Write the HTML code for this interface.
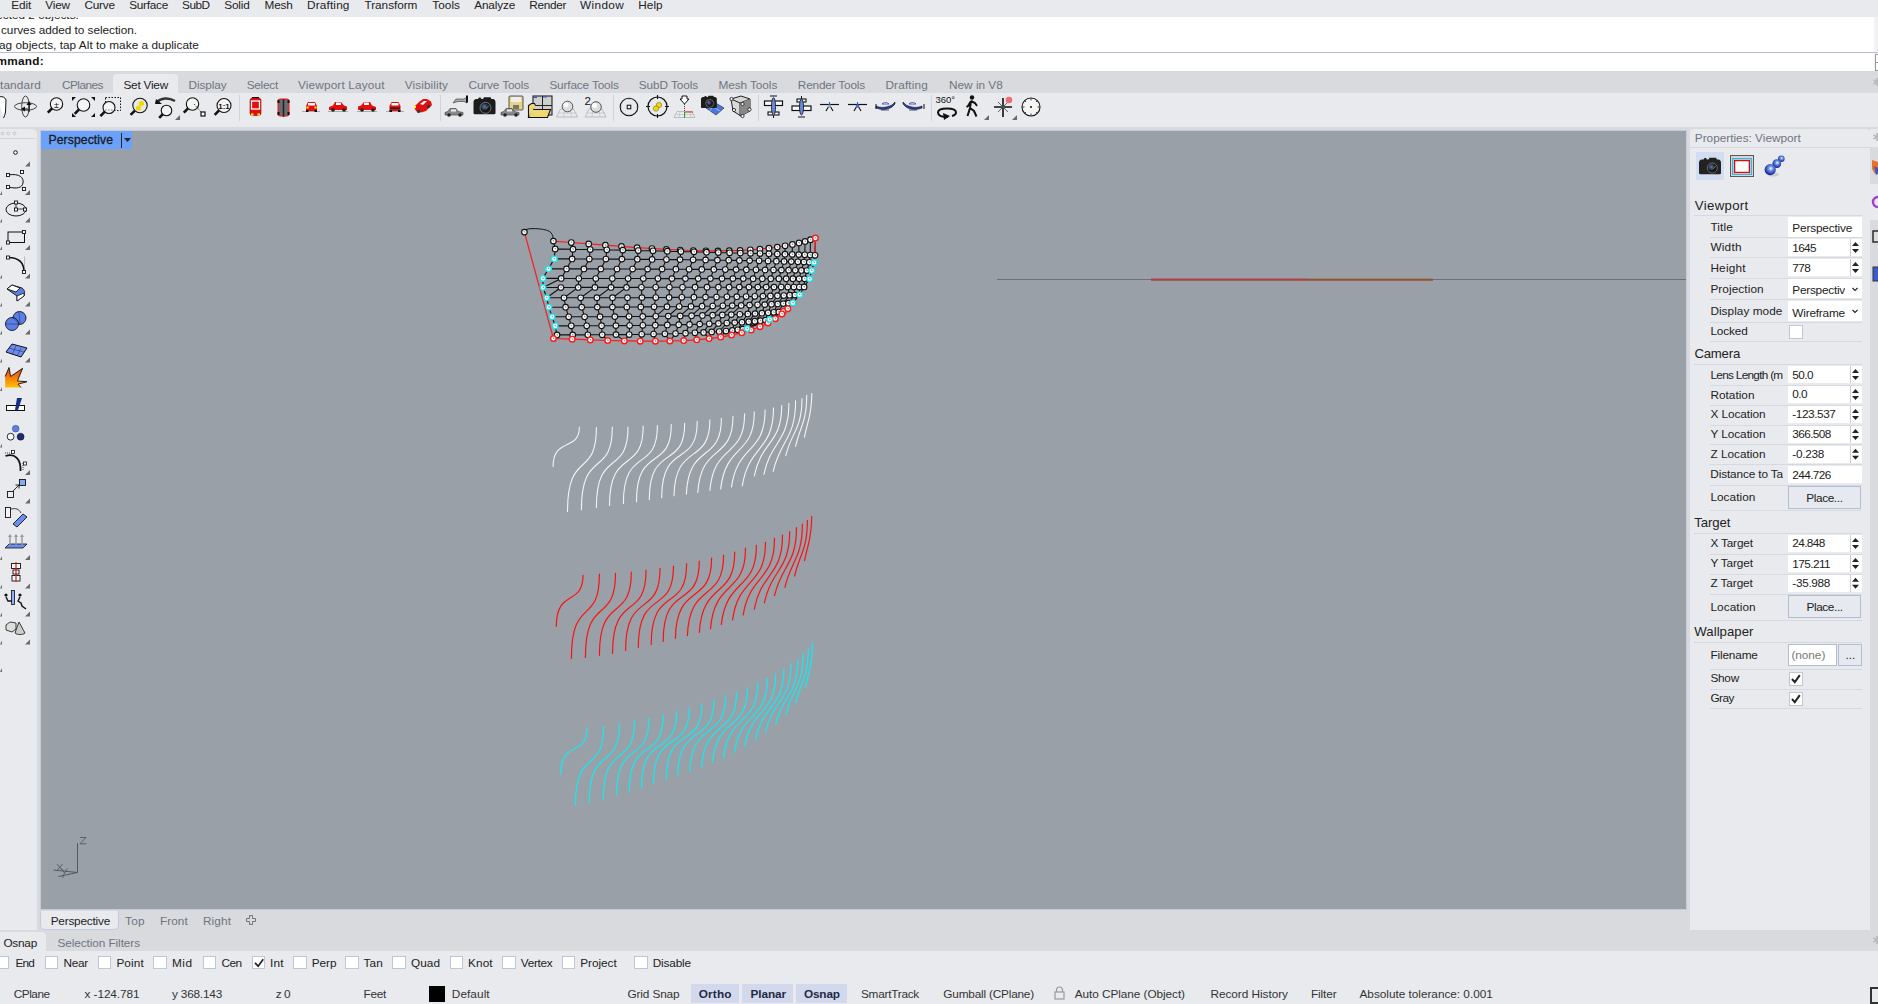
<!DOCTYPE html><html><head><meta charset="utf-8"><style>
html,body{margin:0;padding:0;}
body{width:1878px;height:1004px;position:relative;overflow:hidden;background:#e9eaee;font-family:"Liberation Sans", sans-serif;}
.t{position:absolute;white-space:nowrap;line-height:1;}
.r{position:absolute;}
svg{position:absolute;overflow:visible;}
</style></head><body><div class="r" style="left:0px;top:0px;width:1878px;height:17px;background:#e9eaee;"></div><div class="t" style="left:11.2px;top:0.31px;font-size:11.8px;color:#222;font-weight:normal;letter-spacing:-0.083px;">Edit</div><div class="t" style="left:45.3px;top:0.31px;font-size:11.8px;color:#222;font-weight:normal;letter-spacing:-0.191px;">View</div><div class="t" style="left:84.4px;top:0.31px;font-size:11.8px;color:#222;font-weight:normal;letter-spacing:-0.175px;">Curve</div><div class="t" style="left:129.2px;top:0.31px;font-size:11.8px;color:#222;font-weight:normal;letter-spacing:-0.252px;">Surface</div><div class="t" style="left:182.0px;top:0.31px;font-size:11.8px;color:#222;font-weight:normal;letter-spacing:-0.479px;">SubD</div><div class="t" style="left:224.3px;top:0.31px;font-size:11.8px;color:#222;font-weight:normal;letter-spacing:-0.188px;">Solid</div><div class="t" style="left:264.5px;top:0.31px;font-size:11.8px;color:#222;font-weight:normal;letter-spacing:-0.188px;">Mesh</div><div class="t" style="left:307.0px;top:0.31px;font-size:11.8px;color:#222;font-weight:normal;letter-spacing:0.161px;">Drafting</div><div class="t" style="left:364.5px;top:0.31px;font-size:11.8px;color:#222;font-weight:normal;letter-spacing:-0.047px;">Transform</div><div class="t" style="left:432.3px;top:0.31px;font-size:11.8px;color:#222;font-weight:normal;letter-spacing:0.031px;">Tools</div><div class="t" style="left:474.2px;top:0.31px;font-size:11.8px;color:#222;font-weight:normal;letter-spacing:-0.154px;">Analyze</div><div class="t" style="left:529.2px;top:0.31px;font-size:11.8px;color:#222;font-weight:normal;letter-spacing:-0.283px;">Render</div><div class="t" style="left:580.1px;top:0.31px;font-size:11.8px;color:#222;font-weight:normal;letter-spacing:0.322px;">Window</div><div class="t" style="left:638.2px;top:0.31px;font-size:11.8px;color:#222;font-weight:normal;letter-spacing:0.058px;">Help</div><div class="r" style="left:0;top:17px;width:1874px;height:54px;background:#fff;overflow:hidden"><div class="t" style="left:-13.0px;top:-7.19px;font-size:11.8px;color:#222;font-weight:normal;">elected 2 objects.</div><div class="t" style="left:1.0px;top:7.81px;font-size:11.8px;color:#222;font-weight:normal;letter-spacing:-0.042px;">curves added to selection.</div><div class="t" style="left:-1.0px;top:22.81px;font-size:11.8px;color:#222;font-weight:normal;letter-spacing:0.032px;">ag objects, tap Alt to make a duplicate</div><div class="r" style="left:0px;top:35px;width:1874px;height:1px;background:#b7c0d2;"></div><div class="t" style="left:-3.5px;top:38.81px;font-size:11.8px;color:#111;font-weight:bold;letter-spacing:0.268px;">mmand:</div></div><div class="r" style="left:0px;top:71px;width:1878px;height:22px;background:#d9dade;"></div><div class="r" style="left:113px;top:74px;width:65px;height:19px;background:#e9eaee;border-radius:4px 4px 0 0;"></div><div class="t" style="left:-8.0px;top:79.81px;font-size:11.8px;color:#6e7480;font-weight:normal;letter-spacing:0.139px;">Standard</div><div class="t" style="left:62.0px;top:79.81px;font-size:11.8px;color:#6e7480;font-weight:normal;letter-spacing:-0.514px;">CPlanes</div><div class="t" style="left:123.4px;top:79.81px;font-size:11.8px;color:#222;font-weight:normal;letter-spacing:-0.219px;">Set View</div><div class="t" style="left:188.6px;top:79.81px;font-size:11.8px;color:#6e7480;font-weight:normal;letter-spacing:-0.098px;">Display</div><div class="t" style="left:246.7px;top:79.81px;font-size:11.8px;color:#6e7480;font-weight:normal;letter-spacing:-0.249px;">Select</div><div class="t" style="left:298.0px;top:79.81px;font-size:11.8px;color:#6e7480;font-weight:normal;letter-spacing:0.147px;">Viewport Layout</div><div class="t" style="left:404.8px;top:79.81px;font-size:11.8px;color:#6e7480;font-weight:normal;letter-spacing:0.079px;">Visibility</div><div class="t" style="left:468.5px;top:79.81px;font-size:11.8px;color:#6e7480;font-weight:normal;letter-spacing:-0.144px;">Curve Tools</div><div class="t" style="left:549.4px;top:79.81px;font-size:11.8px;color:#6e7480;font-weight:normal;letter-spacing:-0.152px;">Surface Tools</div><div class="t" style="left:638.8px;top:79.81px;font-size:11.8px;color:#6e7480;font-weight:normal;letter-spacing:-0.093px;">SubD Tools</div><div class="t" style="left:718.4px;top:79.81px;font-size:11.8px;color:#6e7480;font-weight:normal;letter-spacing:-0.056px;">Mesh Tools</div><div class="t" style="left:797.8px;top:79.81px;font-size:11.8px;color:#6e7480;font-weight:normal;letter-spacing:-0.176px;">Render Tools</div><div class="t" style="left:885.4px;top:79.81px;font-size:11.8px;color:#6e7480;font-weight:normal;letter-spacing:0.161px;">Drafting</div><div class="t" style="left:949.0px;top:79.81px;font-size:11.8px;color:#6e7480;font-weight:normal;letter-spacing:0.002px;">New in V8</div><div class="r" style="left:0px;top:93px;width:1878px;height:34px;background:#e9eaee;"></div><div class="r" style="left:238.5px;top:94.5px;width:1.2px;height:26px;background:#cdd3e0;"></div><div class="r" style="left:440px;top:94.5px;width:1.2px;height:26px;background:#cdd3e0;"></div><div class="r" style="left:612.5px;top:94.5px;width:1.2px;height:26px;background:#cdd3e0;"></div><div class="r" style="left:757.5px;top:94.5px;width:1.2px;height:26px;background:#cdd3e0;"></div><div class="r" style="left:930.5px;top:94.5px;width:1.2px;height:26px;background:#cdd3e0;"></div><div class="r" style="left:0px;top:127px;width:1878px;height:824px;background:#d9dade;"></div><div class="r" style="left:0px;top:129px;width:37px;height:801px;background:#e9eaee;border-radius:0 5px 0 0;"></div><div class="r" style="left:41px;top:131px;width:1645px;height:778px;background:#9aa0a8;"></div><div class="r" style="left:40px;top:130px;width:1647px;height:1px;background:#c5cadb;"></div><div class="r" style="left:40px;top:131px;width:1px;height:778px;background:#c5cadb;"></div><div class="r" style="left:1686px;top:131px;width:1px;height:779px;background:#c5cadb;"></div><div class="r" style="left:40px;top:909px;width:1647px;height:1px;background:#c5cadb;"></div><div class="r" style="left:41px;top:910px;width:1645px;height:20px;background:#d9dade;"></div><div class="r" style="left:40px;top:911px;width:79px;height:19px;background:#e9eaee;border:1px solid #c3cadb;border-top:none;box-sizing:border-box;border-radius:0 0 5px 5px"></div><div class="r" style="left:1690px;top:129px;width:180px;height:801px;background:#e9eaee;border-radius:4px 4px 0 0;"></div><div class="r" style="left:1870px;top:129px;width:8px;height:18px;background:#e9eaee;"></div><div class="r" style="left:1870px;top:184px;width:8px;height:36px;background:#e9eaee;"></div><svg style="left:0;top:0" width="1" height="1"><path d="M1872 160l6 2v10l-3 2l-3-5z" fill="#e8702a"/><path d="M1874 166l4 2v6l-2 1z" fill="#3a5ad0"/><circle cx="1878" cy="202" r="5" fill="none" stroke="#a040d0" stroke-width="2.5"/><rect x="1873" y="231" width="6" height="11" fill="#ddd" stroke="#222" stroke-width="1.4"/><rect x="1873" y="267" width="6" height="14" fill="#3a5ad0" stroke="#333" stroke-width="1"/><path d="M1877 78v8M1873.5 80l7 4M1873.5 84l7-4M1877 133v8M1873.5 135l7 4M1873.5 139l7-4" stroke="#b8b8bc" stroke-width="1.6"/></svg><div class="r" style="left:1874px;top:17px;width:4px;height:35px;background:#f2f2f4;"></div><svg style="left:0;top:0" width="1" height="1"><path d="M1877 936v8M1873.5 938l7 4M1873.5 942l7-4" stroke="#b8b8bc" stroke-width="1.6"/></svg><div class="r" style="left:1874px;top:52px;width:4px;height:1px;background:#b7c0d2;"></div><div class="r" style="left:1874px;top:53px;width:4px;height:18px;background:#f2f2f4;"></div><div class="r" style="left:1875px;top:54px;width:6px;height:7px;border:1px solid #999;background:#fff"></div><div class="r" style="left:1875px;top:62px;width:6px;height:7px;border:1px solid #999;background:#fff"></div><svg style="left:0;top:0" width="1878" height="1004" viewBox="0 0 1878 1004"><defs><clipPath id="vpc"><rect x="41" y="131" width="1645" height="778"/></clipPath></defs><g clip-path="url(#vpc)"><path d="M997 279.5H1686" stroke="#6b7077" stroke-width="1"/><path d="M1151 279.6H1433" stroke="#a8443f" stroke-width="2.2"/><path d="M1308 278.5H1433" stroke="#6aa06a" stroke-width="1"/><path d="M553.1 466.5C553.1 436.9 579.4 451.5 579.4 427.1M567.5 511.6C567.5 448.6 596.4 479.6 596.4 427.6M581.4 509.7C581.4 447.8 612.3 478.3 612.3 427.1M596.4 507.4C596.4 447.2 628.0 476.9 628.0 427.1M609.5 505.4C609.5 445.9 643.2 475.2 643.2 426.0M623.4 503.5C623.4 445.0 657.4 473.9 657.4 425.6M636.5 501.7C636.5 443.8 671.3 472.3 671.3 424.5M649.3 499.7C649.3 442.3 684.7 470.6 684.7 423.2M661.7 497.7C661.7 440.5 697.2 468.7 697.2 421.4M674.0 495.8C675.1 441.2 709.9 466.4 709.9 419.8M686.4 494.0C688.5 441.9 721.4 464.0 721.4 418.3M697.8 492.4C701.1 442.3 733.0 461.7 733.0 416.3M709.9 490.4C714.1 442.3 744.6 458.9 744.6 413.7M720.7 488.9C725.8 442.8 754.3 456.6 754.3 411.7M731.5 486.9C737.7 443.5 765.1 454.2 765.1 410.1M742.3 485.8C749.0 444.1 773.5 451.9 773.5 407.8M754.3 476.0C761.1 440.5 781.7 444.9 781.7 405.5M763.9 474.5C770.8 440.8 788.9 442.5 788.9 403.2M773.2 471.4C780.1 440.2 795.6 439.2 795.6 400.8M785.8 455.7C791.3 432.2 802.0 429.1 802.0 398.5M795.6 446.4C799.7 427.0 806.7 422.3 806.7 395.4M804.4 437.1C807.3 421.9 811.8 416.2 811.8 393.6" fill="none" stroke="#f4f4f4" stroke-width="1.1" stroke-linecap="round"/><path d="M556.3 626.3C556.3 588.1 583.0 606.9 583.0 575.3M571.4 658.5C571.4 595.3 599.4 626.5 599.4 574.2M585.4 657.4C585.4 594.3 615.5 625.4 615.5 573.3M599.4 655.3C599.4 592.9 631.3 623.7 631.3 572.1M612.5 653.4C612.5 591.0 646.0 621.8 646.0 570.2M625.6 650.5C625.6 589.0 660.0 619.4 660.0 568.5M638.3 647.3C638.3 586.4 673.5 616.5 673.5 566.1M651.2 644.6C651.2 583.9 686.6 613.9 686.6 563.7M663.2 641.5C663.2 581.1 699.3 610.9 699.3 561.0M675.4 638.3C676.5 580.6 711.6 607.2 711.6 558.1M687.4 635.6C689.6 580.2 723.6 603.7 723.6 555.1M699.3 632.4C702.6 579.7 734.7 600.1 734.7 552.2M710.5 628.7C714.8 578.3 745.5 595.7 745.5 548.2M721.3 624.4C726.7 577.3 756.4 591.3 756.4 545.4M732.5 619.9C738.6 576.1 765.5 586.9 765.5 542.3M743.2 614.8C749.9 574.0 774.5 581.7 774.5 538.4M754.3 609.1C761.3 571.9 782.5 576.5 782.5 535.2M764.3 602.9C771.4 569.1 789.7 570.8 789.7 531.5M774.5 595.7C781.3 565.6 796.5 564.6 796.5 527.5M784.9 587.3C790.8 561.2 802.4 557.9 802.4 524.0M794.6 576.1C799.3 554.9 807.4 549.8 807.4 520.4M804.5 560.7C807.4 545.2 811.7 539.4 811.7 516.4" fill="none" stroke="#ff1010" stroke-width="1.2" stroke-linecap="round"/><path d="M560.6 774.3C560.6 739.7 587.0 756.8 587.0 728.2M575.5 805.3C575.5 746.1 603.6 775.3 603.6 726.4M589.3 802.4C589.3 743.3 619.4 772.5 619.4 723.6M603.3 799.4C603.3 740.2 634.5 769.4 634.5 720.5M616.5 794.9C616.5 737.4 649.0 765.8 649.0 718.2M629.3 791.3C629.3 734.2 663.3 762.4 663.3 715.1M641.6 787.4C641.6 730.8 676.6 758.7 676.6 711.9M653.5 783.3C653.5 726.8 689.3 754.6 689.3 708.0M666.4 779.1C666.4 722.8 701.9 750.6 701.9 704.0M677.7 775.2C678.8 721.3 713.9 746.1 713.9 700.3M689.7 771.2C691.9 719.4 725.5 741.5 725.5 696.0M701.7 767.1C704.9 717.8 736.6 736.9 736.6 692.2M712.6 762.3C716.9 715.5 747.6 731.7 747.6 687.7M723.4 757.6C728.7 713.1 757.8 726.3 757.8 682.9M734.5 752.2C740.5 710.5 767.3 720.8 767.3 678.4M744.9 746.1C751.5 707.5 775.7 714.8 775.7 673.9M755.5 739.3C762.4 704.1 783.8 708.5 783.8 669.4M765.5 732.2C772.5 699.9 790.9 701.6 790.9 664.1M775.7 724.1C782.5 695.6 797.8 694.6 797.8 659.6M785.9 714.6C791.7 689.7 803.1 686.5 803.1 654.2M795.8 702.6C800.4 682.1 808.3 677.2 808.3 648.8M805.6 687.0C808.4 671.8 812.5 666.1 812.5 643.4" fill="none" stroke="#18e8ee" stroke-width="1.3" stroke-linecap="round"/><path d="M555.2 248.9L573.0 249.2L590.2 249.5L606.8 249.8L622.8 250.1L638.2 250.5L653.0 250.8L667.3 251.2L680.9 251.5L694.0 251.8L706.5 252.2L718.3 252.5L729.6 252.8L740.3 253.0L750.5 253.3L760.0 253.5L768.9 253.8L777.3 254.0L785.0 254.2L792.2 254.4L798.8 254.6L804.8 254.8L810.2 255.0L815.0 255.3M554.3 258.9L572.1 258.9L589.3 259.0L605.9 259.0L621.9 259.1L637.3 259.2L652.1 259.4L666.4 259.5L680.0 259.6L693.1 259.8L705.6 259.9L717.4 260.1L728.7 260.2L739.4 260.4L749.6 260.6L759.1 260.8L768.0 261.0L776.4 261.2L784.1 261.4L791.3 261.6L797.9 261.8L803.9 262.0L809.3 262.3L814.1 262.5M548.5 268.8L566.5 268.9L583.9 268.9L600.8 268.9L617.0 269.0L632.6 269.0L647.6 269.1L662.1 269.1L675.9 269.2L689.1 269.3L701.8 269.4L713.8 269.4L725.3 269.5L736.1 269.6L746.3 269.7L756.0 269.8L765.1 269.9L773.5 270.0L781.4 270.1L788.6 270.2L795.3 270.3L801.4 270.4L806.9 270.5L811.7 270.6M542.9 278.4L561.2 278.4L578.8 278.5L595.8 278.5L612.3 278.5L628.1 278.5L643.3 278.5L657.9 278.5L671.9 278.6L685.4 278.6L698.2 278.6L710.4 278.6L722.0 278.6L732.9 278.6L743.3 278.6L753.1 278.7L762.3 278.7L770.8 278.7L778.8 278.7L786.2 278.7L792.9 278.7L799.1 278.8L804.6 278.8L809.6 278.8M543.1 287.5L560.9 287.5L578.2 287.4L594.9 287.4L611.0 287.4L626.5 287.4L641.4 287.3L655.7 287.3L669.4 287.3L682.5 287.3L695.1 287.2L707.0 287.2L718.4 287.2L729.1 287.2L739.3 287.1L748.9 287.1L757.8 287.1L766.2 287.1L774.0 287.1L781.2 287.0L787.8 287.0L793.9 287.0L799.3 287.0L804.1 286.9M546.7 297.8L564.0 297.8L580.7 297.8L596.9 297.7L612.5 297.7L627.5 297.7L641.9 297.6L655.8 297.5L669.1 297.4L681.8 297.3L693.9 297.2L705.5 297.1L716.5 297.0L726.9 296.8L736.8 296.7L746.1 296.5L754.8 296.3L762.9 296.1L770.4 295.9L777.4 295.7L783.8 295.5L789.7 295.2L794.9 295.0L799.6 294.7M548.9 307.2L565.6 307.2L581.7 307.2L597.3 307.1L612.4 307.1L626.8 307.0L640.8 306.9L654.1 306.8L667.0 306.7L679.2 306.5L691.0 306.4L702.1 306.2L712.7 306.0L722.8 305.8L732.3 305.6L741.2 305.4L749.6 305.1L757.5 304.8L764.8 304.6L771.5 304.2L777.7 303.9L783.3 303.6L788.4 303.2L792.9 302.9M552.1 316.8L568.7 316.8L584.6 316.8L600.0 316.7L614.8 316.6L629.0 316.5L642.7 316.4L655.8 316.3L668.3 316.1L680.2 315.9L691.6 315.7L702.4 315.4L712.6 315.2L722.3 314.9L731.3 314.6L739.8 314.3L747.8 313.9L755.1 313.6L761.9 313.2L768.1 312.8L773.8 312.3L778.8 311.9L783.3 311.4M555.2 325.9L571.3 325.8L586.7 325.8L601.6 325.7L615.9 325.6L629.6 325.5L642.8 325.3L655.3 325.2L667.3 324.9L678.7 324.7L689.5 324.4L699.7 324.1L709.3 323.8L718.4 323.4L726.8 323.0L734.7 322.6L742.0 322.2L748.7 321.7L754.8 321.2L760.4 320.7L765.4 320.1L769.7 319.5M557.0 334.9L572.7 334.9L587.8 334.8L602.2 334.8L616.0 334.6L629.2 334.5L641.7 334.3L653.6 334.0L664.9 333.8L675.5 333.5L685.5 333.2L694.9 332.8L703.6 332.4L711.7 331.9L719.2 331.5L726.0 331.0L732.3 330.4L737.8 329.8L742.8 329.2L747.1 328.6M555.2 248.9L554.3 258.9M573.0 249.2L572.1 258.9M590.2 249.5L589.3 259.0M606.8 249.8L605.9 259.0M622.8 250.1L621.9 259.1M638.2 250.5L637.3 259.2M653.0 250.8L652.1 259.4M667.3 251.2L666.4 259.5M680.9 251.5L680.0 259.6M694.0 251.8L693.1 259.8M706.5 252.2L705.6 259.9M718.3 252.5L717.4 260.1M729.6 252.8L728.7 260.2M740.3 253.0L739.4 260.4M750.5 253.3L749.6 260.6M760.0 253.5L759.1 260.8M768.9 253.8L768.0 261.0M777.3 254.0L776.4 261.2M785.0 254.2L784.1 261.4M792.2 254.4L791.3 261.6M798.8 254.6L797.9 261.8M804.8 254.8L803.9 262.0M810.2 255.0L809.3 262.3M815.0 255.3L814.1 262.5M554.3 258.9L548.5 268.8M572.1 258.9L566.5 268.9M589.3 259.0L583.9 268.9M605.9 259.0L600.8 268.9M621.9 259.1L617.0 269.0M637.3 259.2L632.6 269.0M652.1 259.4L647.6 269.1M666.4 259.5L662.1 269.1M680.0 259.6L675.9 269.2M693.1 259.8L689.1 269.3M705.6 259.9L701.8 269.4M717.4 260.1L713.8 269.4M728.7 260.2L725.3 269.5M739.4 260.4L736.1 269.6M749.6 260.6L746.3 269.7M759.1 260.8L756.0 269.8M768.0 261.0L765.1 269.9M776.4 261.2L773.5 270.0M784.1 261.4L781.4 270.1M791.3 261.6L788.6 270.2M797.9 261.8L795.3 270.3M803.9 262.0L801.4 270.4M809.3 262.3L806.9 270.5M814.1 262.5L811.7 270.6M548.5 268.8L542.9 278.4M566.5 268.9L561.2 278.4M583.9 268.9L578.8 278.5M600.8 268.9L595.8 278.5M617.0 269.0L612.3 278.5M632.6 269.0L628.1 278.5M647.6 269.1L643.3 278.5M662.1 269.1L657.9 278.5M675.9 269.2L671.9 278.6M689.1 269.3L685.4 278.6M701.8 269.4L698.2 278.6M713.8 269.4L710.4 278.6M725.3 269.5L722.0 278.6M736.1 269.6L732.9 278.6M746.3 269.7L743.3 278.6M756.0 269.8L753.1 278.7M765.1 269.9L762.3 278.7M773.5 270.0L770.8 278.7M781.4 270.1L778.8 278.7M788.6 270.2L786.2 278.7M795.3 270.3L792.9 278.7M801.4 270.4L799.1 278.8M806.9 270.5L804.6 278.8M811.7 270.6L809.6 278.8M542.9 278.4L543.1 287.5M561.2 278.4L543.1 287.5M578.8 278.5L578.2 287.4M595.8 278.5L594.9 287.4M612.3 278.5L611.0 287.4M628.1 278.5L626.5 287.4M643.3 278.5L641.4 287.3M657.9 278.5L655.7 287.3M671.9 278.6L669.4 287.3M685.4 278.6L682.5 287.3M698.2 278.6L695.1 287.2M710.4 278.6L707.0 287.2M722.0 278.6L718.4 287.2M732.9 278.6L729.1 287.2M743.3 278.6L739.3 287.1M753.1 278.7L748.9 287.1M762.3 278.7L757.8 287.1M770.8 278.7L766.2 287.1M778.8 278.7L781.2 287.0M786.2 278.7L787.8 287.0M792.9 278.7L793.9 287.0M799.1 278.8L799.3 287.0M804.6 278.8L804.1 286.9M809.6 278.8L804.1 286.9M543.1 287.5L546.7 297.8M560.9 287.5L546.7 297.8M578.2 287.4L564.0 297.8M594.9 287.4L580.7 297.8M611.0 287.4L596.9 297.7M626.5 287.4L612.5 297.7M641.4 287.3L641.9 297.6M655.7 287.3L655.8 297.5M669.4 287.3L669.1 297.4M682.5 287.3L681.8 297.3M695.1 287.2L693.9 297.2M707.0 287.2L705.5 297.1M718.4 287.2L716.5 297.0M729.1 287.2L726.9 296.8M739.3 287.1L736.8 296.7M748.9 287.1L746.1 296.5M757.8 287.1L754.8 296.3M766.2 287.1L762.9 296.1M774.0 287.1L770.4 295.9M781.2 287.0L777.4 295.7M787.8 287.0L789.7 295.2M793.9 287.0L794.9 295.0M799.3 287.0L799.6 294.7M804.1 286.9L799.6 294.7M546.7 297.8L548.9 307.2M564.0 297.8L565.6 307.2M580.7 297.8L581.7 307.2M596.9 297.7L597.3 307.1M612.5 297.7L612.4 307.1M627.5 297.7L626.8 307.0M641.9 297.6L640.8 306.9M655.8 297.5L654.1 306.8M669.1 297.4L667.0 306.7M681.8 297.3L679.2 306.5M693.9 297.2L691.0 306.4M705.5 297.1L702.1 306.2M716.5 297.0L712.7 306.0M726.9 296.8L722.8 305.8M736.8 296.7L732.3 305.6M746.1 296.5L741.2 305.4M754.8 296.3L749.6 305.1M762.9 296.1L757.5 304.8M770.4 295.9L764.8 304.6M777.4 295.7L771.5 304.2M783.8 295.5L777.7 303.9M789.7 295.2L783.3 303.6M794.9 295.0L788.4 303.2M799.6 294.7L792.9 302.9M548.9 307.2L552.1 316.8M565.6 307.2L568.7 316.8M581.7 307.2L584.6 316.8M597.3 307.1L600.0 316.7M612.4 307.1L614.8 316.6M626.8 307.0L629.0 316.5M640.8 306.9L642.7 316.4M654.1 306.8L655.8 316.3M667.0 306.7L655.8 316.3M679.2 306.5L668.3 316.1M691.0 306.4L680.2 315.9M702.1 306.2L691.6 315.7M712.7 306.0L702.4 315.4M722.8 305.8L712.6 315.2M732.3 305.6L722.3 314.9M741.2 305.4L731.3 314.6M749.6 305.1L747.8 313.9M757.5 304.8L755.1 313.6M764.8 304.6L761.9 313.2M771.5 304.2L768.1 312.8M777.7 303.9L773.8 312.3M783.3 303.6L778.8 311.9M788.4 303.2L783.3 311.4M792.9 302.9L783.3 311.4M552.1 316.8L555.2 325.9M568.7 316.8L571.3 325.8M584.6 316.8L586.7 325.8M600.0 316.7L601.6 325.7M614.8 316.6L615.9 325.6M629.0 316.5L629.6 325.5M642.7 316.4L642.8 325.3M655.8 316.3L655.3 325.2M668.3 316.1L667.3 324.9M680.2 315.9L678.7 324.7M691.6 315.7L689.5 324.4M702.4 315.4L699.7 324.1M712.6 315.2L709.3 323.8M722.3 314.9L718.4 323.4M731.3 314.6L726.8 323.0M739.8 314.3L734.7 322.6M747.8 313.9L742.0 322.2M755.1 313.6L748.7 321.7M761.9 313.2L754.8 321.2M768.1 312.8L765.4 320.1M773.8 312.3L769.7 319.5M778.8 311.9L769.7 319.5M783.3 311.4L769.7 319.5M555.2 325.9L557.0 334.9M571.3 325.8L572.7 334.9M586.7 325.8L587.8 334.8M601.6 325.7L602.2 334.8M615.9 325.6L616.0 334.6M629.6 325.5L629.2 334.5M642.8 325.3L641.7 334.3M655.3 325.2L653.6 334.0M667.3 324.9L664.9 333.8M678.7 324.7L675.5 333.5M689.5 324.4L685.5 333.2M699.7 324.1L694.9 332.8M709.3 323.8L703.6 332.4M718.4 323.4L711.7 331.9M726.8 323.0L719.2 331.5M734.7 322.6L732.3 330.4M742.0 322.2L737.8 329.8M748.7 321.7L742.8 329.2M754.8 321.2L747.1 328.6M760.4 320.7L747.1 328.6M765.4 320.1L747.1 328.6M769.7 319.5L747.1 328.6M555.2 248.9L553.4 241.1M573.0 249.2L571.3 242.5M590.2 249.5L588.7 243.9M606.8 249.8L605.4 245.2M622.8 250.1L621.5 246.4M638.2 250.5L637.1 247.6M653.0 250.8L652.0 248.5M667.3 251.2L666.4 249.4M680.9 251.5L680.2 250.0M694.0 251.8L693.3 250.5M706.5 252.2L705.9 250.8M718.3 252.5L717.9 250.9M729.6 252.8L729.3 250.7M740.3 253.0L740.1 250.4M750.5 253.3L750.3 249.8M760.0 253.5L759.9 249.1M768.9 253.8L768.9 248.2M777.3 254.0L777.3 247.1M785.0 254.2L785.1 245.8M792.2 254.4L792.4 244.4M798.8 254.6L799.0 242.9M804.8 254.8L805.1 241.4M810.2 255.0L810.5 239.7M815.0 255.3L815.4 238.1M557.0 334.9L553.4 338.5M572.7 334.9L572.2 339.2M587.8 334.8L590.3 339.9M602.2 334.8L607.7 340.5M616.0 334.6L624.3 340.9M629.2 334.5L624.3 340.9M641.7 334.3L640.2 341.2M653.6 334.0L655.4 341.2M664.9 333.8L669.9 341.0M675.5 333.5L669.9 341.0M685.5 333.2L683.7 340.6M694.9 332.8L696.7 339.8M703.6 332.4L709.1 338.6M711.7 331.9L709.1 338.6M719.2 331.5L720.7 337.1M726.0 331.0L720.7 337.1M732.3 330.4L731.6 335.1M737.8 329.8L741.8 332.8M742.8 329.2L741.8 332.8M747.1 328.6L751.2 330.0" fill="none" stroke="#111" stroke-width="1.1"/><path d="M553.4 241.1L571.3 242.5L588.7 243.9L605.4 245.2L621.5 246.4L637.1 247.6L652.0 248.5L666.4 249.4L680.2 250.0L693.3 250.5L705.9 250.8L717.9 250.9L729.3 250.7L740.1 250.4L750.3 249.8L759.9 249.1L768.9 248.2L777.3 247.1L785.1 245.8L792.4 244.4L799.0 242.9L805.1 241.4L810.5 239.7L815.4 238.1M553.4 338.5L572.2 339.2L590.3 339.9L607.7 340.5L624.3 340.9L640.2 341.2L655.4 341.2L669.9 341.0L683.7 340.6L696.7 339.8L709.1 338.6L720.7 337.1L731.6 335.1L741.8 332.8L751.2 330.0L760.0 326.7L768.0 322.9L775.3 318.7L781.9 313.9L787.8 308.7L792.9 302.9M524.4 232.1L553.4 338.5M815.4 238.1L815.0 255.3" fill="none" stroke="#ff1a1a" stroke-width="1.2"/><path d="M524.4 231.4C523.5 227.2 545.3 228.1 549.8 231.7S552.5 239.0 553.4 241.1" fill="none" stroke="#111" stroke-width="1"/><circle cx="553.4" cy="241.1" r="2.8" fill="#fff" stroke="#111" stroke-width="1.15"/><path d="M553.3 240.0v1.2h1.1" fill="none" stroke="#444" stroke-width="0.55"/><circle cx="571.3" cy="242.5" r="2.8" fill="#fff" stroke="#111" stroke-width="1.15"/><path d="M571.2 241.4v1.2h1.1" fill="none" stroke="#444" stroke-width="0.55"/><circle cx="588.7" cy="243.9" r="2.8" fill="#fff" stroke="#111" stroke-width="1.15"/><path d="M588.6 242.8v1.2h1.1" fill="none" stroke="#444" stroke-width="0.55"/><circle cx="605.4" cy="245.2" r="2.8" fill="#fff" stroke="#111" stroke-width="1.15"/><path d="M605.3 244.1v1.2h1.1" fill="none" stroke="#444" stroke-width="0.55"/><circle cx="621.5" cy="246.4" r="2.8" fill="#fff" stroke="#111" stroke-width="1.15"/><path d="M621.4 245.3v1.2h1.1" fill="none" stroke="#444" stroke-width="0.55"/><circle cx="637.1" cy="247.6" r="2.8" fill="#fff" stroke="#111" stroke-width="1.15"/><path d="M637.0 246.5v1.2h1.1" fill="none" stroke="#444" stroke-width="0.55"/><circle cx="652.0" cy="248.5" r="2.8" fill="#fff" stroke="#111" stroke-width="1.15"/><path d="M651.9 247.4v1.2h1.1" fill="none" stroke="#444" stroke-width="0.55"/><circle cx="666.4" cy="249.4" r="2.8" fill="#fff" stroke="#111" stroke-width="1.15"/><path d="M666.3 248.3v1.2h1.1" fill="none" stroke="#444" stroke-width="0.55"/><circle cx="680.2" cy="250.0" r="2.8" fill="#fff" stroke="#111" stroke-width="1.15"/><path d="M680.1 248.9v1.2h1.1" fill="none" stroke="#444" stroke-width="0.55"/><circle cx="693.3" cy="250.5" r="2.8" fill="#fff" stroke="#111" stroke-width="1.15"/><path d="M693.2 249.4v1.2h1.1" fill="none" stroke="#444" stroke-width="0.55"/><circle cx="705.9" cy="250.8" r="2.8" fill="#fff" stroke="#111" stroke-width="1.15"/><path d="M705.8 249.7v1.2h1.1" fill="none" stroke="#444" stroke-width="0.55"/><circle cx="717.9" cy="250.9" r="2.8" fill="#fff" stroke="#111" stroke-width="1.15"/><path d="M717.8 249.8v1.2h1.1" fill="none" stroke="#444" stroke-width="0.55"/><circle cx="729.3" cy="250.7" r="2.8" fill="#fff" stroke="#111" stroke-width="1.15"/><path d="M729.2 249.6v1.2h1.1" fill="none" stroke="#444" stroke-width="0.55"/><circle cx="740.1" cy="250.4" r="2.8" fill="#fff" stroke="#111" stroke-width="1.15"/><path d="M740.0 249.3v1.2h1.1" fill="none" stroke="#444" stroke-width="0.55"/><circle cx="750.3" cy="249.8" r="2.8" fill="#fff" stroke="#111" stroke-width="1.15"/><path d="M750.2 248.7v1.2h1.1" fill="none" stroke="#444" stroke-width="0.55"/><circle cx="759.9" cy="249.1" r="2.8" fill="#fff" stroke="#111" stroke-width="1.15"/><path d="M759.8 248.0v1.2h1.1" fill="none" stroke="#444" stroke-width="0.55"/><circle cx="768.9" cy="248.2" r="2.8" fill="#fff" stroke="#111" stroke-width="1.15"/><path d="M768.8 247.1v1.2h1.1" fill="none" stroke="#444" stroke-width="0.55"/><circle cx="777.3" cy="247.1" r="2.8" fill="#fff" stroke="#111" stroke-width="1.15"/><path d="M777.2 246.0v1.2h1.1" fill="none" stroke="#444" stroke-width="0.55"/><circle cx="785.1" cy="245.8" r="2.8" fill="#fff" stroke="#111" stroke-width="1.15"/><path d="M785.0 244.7v1.2h1.1" fill="none" stroke="#444" stroke-width="0.55"/><circle cx="792.4" cy="244.4" r="2.8" fill="#fff" stroke="#111" stroke-width="1.15"/><path d="M792.3 243.3v1.2h1.1" fill="none" stroke="#444" stroke-width="0.55"/><circle cx="799.0" cy="242.9" r="2.8" fill="#fff" stroke="#111" stroke-width="1.15"/><path d="M798.9 241.8v1.2h1.1" fill="none" stroke="#444" stroke-width="0.55"/><circle cx="805.1" cy="241.4" r="2.8" fill="#fff" stroke="#111" stroke-width="1.15"/><path d="M805.0 240.3v1.2h1.1" fill="none" stroke="#444" stroke-width="0.55"/><circle cx="810.5" cy="239.7" r="2.8" fill="#fff" stroke="#111" stroke-width="1.15"/><path d="M810.4 238.6v1.2h1.1" fill="none" stroke="#444" stroke-width="0.55"/><circle cx="555.2" cy="248.9" r="2.8" fill="#fff" stroke="#111" stroke-width="1.15"/><path d="M555.1 247.8v1.2h1.1" fill="none" stroke="#444" stroke-width="0.55"/><circle cx="573.0" cy="249.2" r="2.8" fill="#fff" stroke="#111" stroke-width="1.15"/><path d="M572.9 248.1v1.2h1.1" fill="none" stroke="#444" stroke-width="0.55"/><circle cx="590.2" cy="249.5" r="2.8" fill="#fff" stroke="#111" stroke-width="1.15"/><path d="M590.1 248.4v1.2h1.1" fill="none" stroke="#444" stroke-width="0.55"/><circle cx="606.8" cy="249.8" r="2.8" fill="#fff" stroke="#111" stroke-width="1.15"/><path d="M606.7 248.7v1.2h1.1" fill="none" stroke="#444" stroke-width="0.55"/><circle cx="622.8" cy="250.1" r="2.8" fill="#fff" stroke="#111" stroke-width="1.15"/><path d="M622.7 249.0v1.2h1.1" fill="none" stroke="#444" stroke-width="0.55"/><circle cx="638.2" cy="250.5" r="2.8" fill="#fff" stroke="#111" stroke-width="1.15"/><path d="M638.1 249.4v1.2h1.1" fill="none" stroke="#444" stroke-width="0.55"/><circle cx="653.0" cy="250.8" r="2.8" fill="#fff" stroke="#111" stroke-width="1.15"/><path d="M652.9 249.7v1.2h1.1" fill="none" stroke="#444" stroke-width="0.55"/><circle cx="667.3" cy="251.2" r="2.8" fill="#fff" stroke="#111" stroke-width="1.15"/><path d="M667.2 250.1v1.2h1.1" fill="none" stroke="#444" stroke-width="0.55"/><circle cx="680.9" cy="251.5" r="2.8" fill="#fff" stroke="#111" stroke-width="1.15"/><path d="M680.8 250.4v1.2h1.1" fill="none" stroke="#444" stroke-width="0.55"/><circle cx="694.0" cy="251.8" r="2.8" fill="#fff" stroke="#111" stroke-width="1.15"/><path d="M693.9 250.7v1.2h1.1" fill="none" stroke="#444" stroke-width="0.55"/><circle cx="706.5" cy="252.2" r="2.8" fill="#fff" stroke="#111" stroke-width="1.15"/><path d="M706.4 251.1v1.2h1.1" fill="none" stroke="#444" stroke-width="0.55"/><circle cx="718.3" cy="252.5" r="2.8" fill="#fff" stroke="#111" stroke-width="1.15"/><path d="M718.2 251.4v1.2h1.1" fill="none" stroke="#444" stroke-width="0.55"/><circle cx="729.6" cy="252.8" r="2.8" fill="#fff" stroke="#111" stroke-width="1.15"/><path d="M729.5 251.7v1.2h1.1" fill="none" stroke="#444" stroke-width="0.55"/><circle cx="740.3" cy="253.0" r="2.8" fill="#fff" stroke="#111" stroke-width="1.15"/><path d="M740.2 251.9v1.2h1.1" fill="none" stroke="#444" stroke-width="0.55"/><circle cx="750.5" cy="253.3" r="2.8" fill="#fff" stroke="#111" stroke-width="1.15"/><path d="M750.4 252.2v1.2h1.1" fill="none" stroke="#444" stroke-width="0.55"/><circle cx="760.0" cy="253.5" r="2.8" fill="#fff" stroke="#111" stroke-width="1.15"/><path d="M759.9 252.4v1.2h1.1" fill="none" stroke="#444" stroke-width="0.55"/><circle cx="768.9" cy="253.8" r="2.8" fill="#fff" stroke="#111" stroke-width="1.15"/><path d="M768.8 252.7v1.2h1.1" fill="none" stroke="#444" stroke-width="0.55"/><circle cx="777.3" cy="254.0" r="2.8" fill="#fff" stroke="#111" stroke-width="1.15"/><path d="M777.2 252.9v1.2h1.1" fill="none" stroke="#444" stroke-width="0.55"/><circle cx="785.0" cy="254.2" r="2.8" fill="#fff" stroke="#111" stroke-width="1.15"/><path d="M784.9 253.1v1.2h1.1" fill="none" stroke="#444" stroke-width="0.55"/><circle cx="792.2" cy="254.4" r="2.8" fill="#fff" stroke="#111" stroke-width="1.15"/><path d="M792.1 253.3v1.2h1.1" fill="none" stroke="#444" stroke-width="0.55"/><circle cx="798.8" cy="254.6" r="2.8" fill="#fff" stroke="#111" stroke-width="1.15"/><path d="M798.7 253.5v1.2h1.1" fill="none" stroke="#444" stroke-width="0.55"/><circle cx="804.8" cy="254.8" r="2.8" fill="#fff" stroke="#111" stroke-width="1.15"/><path d="M804.7 253.7v1.2h1.1" fill="none" stroke="#444" stroke-width="0.55"/><circle cx="810.2" cy="255.0" r="2.8" fill="#fff" stroke="#111" stroke-width="1.15"/><path d="M810.1 253.9v1.2h1.1" fill="none" stroke="#444" stroke-width="0.55"/><circle cx="815.0" cy="255.3" r="2.8" fill="#fff" stroke="#111" stroke-width="1.15"/><path d="M814.9 254.2v1.2h1.1" fill="none" stroke="#444" stroke-width="0.55"/><circle cx="572.1" cy="258.9" r="2.8" fill="#fff" stroke="#111" stroke-width="1.15"/><path d="M572.0 257.8v1.2h1.1" fill="none" stroke="#444" stroke-width="0.55"/><circle cx="589.3" cy="259.0" r="2.8" fill="#fff" stroke="#111" stroke-width="1.15"/><path d="M589.2 257.9v1.2h1.1" fill="none" stroke="#444" stroke-width="0.55"/><circle cx="605.9" cy="259.0" r="2.8" fill="#fff" stroke="#111" stroke-width="1.15"/><path d="M605.8 257.9v1.2h1.1" fill="none" stroke="#444" stroke-width="0.55"/><circle cx="621.9" cy="259.1" r="2.8" fill="#fff" stroke="#111" stroke-width="1.15"/><path d="M621.8 258.0v1.2h1.1" fill="none" stroke="#444" stroke-width="0.55"/><circle cx="637.3" cy="259.2" r="2.8" fill="#fff" stroke="#111" stroke-width="1.15"/><path d="M637.2 258.1v1.2h1.1" fill="none" stroke="#444" stroke-width="0.55"/><circle cx="652.1" cy="259.4" r="2.8" fill="#fff" stroke="#111" stroke-width="1.15"/><path d="M652.0 258.3v1.2h1.1" fill="none" stroke="#444" stroke-width="0.55"/><circle cx="666.4" cy="259.5" r="2.8" fill="#fff" stroke="#111" stroke-width="1.15"/><path d="M666.3 258.4v1.2h1.1" fill="none" stroke="#444" stroke-width="0.55"/><circle cx="680.0" cy="259.6" r="2.8" fill="#fff" stroke="#111" stroke-width="1.15"/><path d="M679.9 258.5v1.2h1.1" fill="none" stroke="#444" stroke-width="0.55"/><circle cx="693.1" cy="259.8" r="2.8" fill="#fff" stroke="#111" stroke-width="1.15"/><path d="M693.0 258.7v1.2h1.1" fill="none" stroke="#444" stroke-width="0.55"/><circle cx="705.6" cy="259.9" r="2.8" fill="#fff" stroke="#111" stroke-width="1.15"/><path d="M705.5 258.8v1.2h1.1" fill="none" stroke="#444" stroke-width="0.55"/><circle cx="717.4" cy="260.1" r="2.8" fill="#fff" stroke="#111" stroke-width="1.15"/><path d="M717.3 259.0v1.2h1.1" fill="none" stroke="#444" stroke-width="0.55"/><circle cx="728.7" cy="260.2" r="2.8" fill="#fff" stroke="#111" stroke-width="1.15"/><path d="M728.6 259.1v1.2h1.1" fill="none" stroke="#444" stroke-width="0.55"/><circle cx="739.4" cy="260.4" r="2.8" fill="#fff" stroke="#111" stroke-width="1.15"/><path d="M739.3 259.3v1.2h1.1" fill="none" stroke="#444" stroke-width="0.55"/><circle cx="749.6" cy="260.6" r="2.8" fill="#fff" stroke="#111" stroke-width="1.15"/><path d="M749.5 259.5v1.2h1.1" fill="none" stroke="#444" stroke-width="0.55"/><circle cx="759.1" cy="260.8" r="2.8" fill="#fff" stroke="#111" stroke-width="1.15"/><path d="M759.0 259.7v1.2h1.1" fill="none" stroke="#444" stroke-width="0.55"/><circle cx="768.0" cy="261.0" r="2.8" fill="#fff" stroke="#111" stroke-width="1.15"/><path d="M767.9 259.9v1.2h1.1" fill="none" stroke="#444" stroke-width="0.55"/><circle cx="776.4" cy="261.2" r="2.8" fill="#fff" stroke="#111" stroke-width="1.15"/><path d="M776.3 260.1v1.2h1.1" fill="none" stroke="#444" stroke-width="0.55"/><circle cx="784.1" cy="261.4" r="2.8" fill="#fff" stroke="#111" stroke-width="1.15"/><path d="M784.0 260.3v1.2h1.1" fill="none" stroke="#444" stroke-width="0.55"/><circle cx="791.3" cy="261.6" r="2.8" fill="#fff" stroke="#111" stroke-width="1.15"/><path d="M791.2 260.5v1.2h1.1" fill="none" stroke="#444" stroke-width="0.55"/><circle cx="797.9" cy="261.8" r="2.8" fill="#fff" stroke="#111" stroke-width="1.15"/><path d="M797.8 260.7v1.2h1.1" fill="none" stroke="#444" stroke-width="0.55"/><circle cx="803.9" cy="262.0" r="2.8" fill="#fff" stroke="#111" stroke-width="1.15"/><path d="M803.8 260.9v1.2h1.1" fill="none" stroke="#444" stroke-width="0.55"/><circle cx="809.3" cy="262.3" r="2.8" fill="#fff" stroke="#111" stroke-width="1.15"/><path d="M809.2 261.2v1.2h1.1" fill="none" stroke="#444" stroke-width="0.55"/><circle cx="566.5" cy="268.9" r="2.8" fill="#fff" stroke="#111" stroke-width="1.15"/><path d="M566.4 267.8v1.2h1.1" fill="none" stroke="#444" stroke-width="0.55"/><circle cx="583.9" cy="268.9" r="2.8" fill="#fff" stroke="#111" stroke-width="1.15"/><path d="M583.8 267.8v1.2h1.1" fill="none" stroke="#444" stroke-width="0.55"/><circle cx="600.8" cy="268.9" r="2.8" fill="#fff" stroke="#111" stroke-width="1.15"/><path d="M600.7 267.8v1.2h1.1" fill="none" stroke="#444" stroke-width="0.55"/><circle cx="617.0" cy="269.0" r="2.8" fill="#fff" stroke="#111" stroke-width="1.15"/><path d="M616.9 267.9v1.2h1.1" fill="none" stroke="#444" stroke-width="0.55"/><circle cx="632.6" cy="269.0" r="2.8" fill="#fff" stroke="#111" stroke-width="1.15"/><path d="M632.5 267.9v1.2h1.1" fill="none" stroke="#444" stroke-width="0.55"/><circle cx="647.6" cy="269.1" r="2.8" fill="#fff" stroke="#111" stroke-width="1.15"/><path d="M647.5 268.0v1.2h1.1" fill="none" stroke="#444" stroke-width="0.55"/><circle cx="662.1" cy="269.1" r="2.8" fill="#fff" stroke="#111" stroke-width="1.15"/><path d="M662.0 268.0v1.2h1.1" fill="none" stroke="#444" stroke-width="0.55"/><circle cx="675.9" cy="269.2" r="2.8" fill="#fff" stroke="#111" stroke-width="1.15"/><path d="M675.8 268.1v1.2h1.1" fill="none" stroke="#444" stroke-width="0.55"/><circle cx="689.1" cy="269.3" r="2.8" fill="#fff" stroke="#111" stroke-width="1.15"/><path d="M689.0 268.2v1.2h1.1" fill="none" stroke="#444" stroke-width="0.55"/><circle cx="701.8" cy="269.4" r="2.8" fill="#fff" stroke="#111" stroke-width="1.15"/><path d="M701.7 268.3v1.2h1.1" fill="none" stroke="#444" stroke-width="0.55"/><circle cx="713.8" cy="269.4" r="2.8" fill="#fff" stroke="#111" stroke-width="1.15"/><path d="M713.7 268.3v1.2h1.1" fill="none" stroke="#444" stroke-width="0.55"/><circle cx="725.3" cy="269.5" r="2.8" fill="#fff" stroke="#111" stroke-width="1.15"/><path d="M725.2 268.4v1.2h1.1" fill="none" stroke="#444" stroke-width="0.55"/><circle cx="736.1" cy="269.6" r="2.8" fill="#fff" stroke="#111" stroke-width="1.15"/><path d="M736.0 268.5v1.2h1.1" fill="none" stroke="#444" stroke-width="0.55"/><circle cx="746.3" cy="269.7" r="2.8" fill="#fff" stroke="#111" stroke-width="1.15"/><path d="M746.2 268.6v1.2h1.1" fill="none" stroke="#444" stroke-width="0.55"/><circle cx="756.0" cy="269.8" r="2.8" fill="#fff" stroke="#111" stroke-width="1.15"/><path d="M755.9 268.7v1.2h1.1" fill="none" stroke="#444" stroke-width="0.55"/><circle cx="765.1" cy="269.9" r="2.8" fill="#fff" stroke="#111" stroke-width="1.15"/><path d="M765.0 268.8v1.2h1.1" fill="none" stroke="#444" stroke-width="0.55"/><circle cx="773.5" cy="270.0" r="2.8" fill="#fff" stroke="#111" stroke-width="1.15"/><path d="M773.4 268.9v1.2h1.1" fill="none" stroke="#444" stroke-width="0.55"/><circle cx="781.4" cy="270.1" r="2.8" fill="#fff" stroke="#111" stroke-width="1.15"/><path d="M781.3 269.0v1.2h1.1" fill="none" stroke="#444" stroke-width="0.55"/><circle cx="788.6" cy="270.2" r="2.8" fill="#fff" stroke="#111" stroke-width="1.15"/><path d="M788.5 269.1v1.2h1.1" fill="none" stroke="#444" stroke-width="0.55"/><circle cx="795.3" cy="270.3" r="2.8" fill="#fff" stroke="#111" stroke-width="1.15"/><path d="M795.2 269.2v1.2h1.1" fill="none" stroke="#444" stroke-width="0.55"/><circle cx="801.4" cy="270.4" r="2.8" fill="#fff" stroke="#111" stroke-width="1.15"/><path d="M801.3 269.3v1.2h1.1" fill="none" stroke="#444" stroke-width="0.55"/><circle cx="806.9" cy="270.5" r="2.8" fill="#fff" stroke="#111" stroke-width="1.15"/><path d="M806.8 269.4v1.2h1.1" fill="none" stroke="#444" stroke-width="0.55"/><circle cx="561.2" cy="278.4" r="2.8" fill="#fff" stroke="#111" stroke-width="1.15"/><path d="M561.1 277.3v1.2h1.1" fill="none" stroke="#444" stroke-width="0.55"/><circle cx="578.8" cy="278.5" r="2.8" fill="#fff" stroke="#111" stroke-width="1.15"/><path d="M578.7 277.4v1.2h1.1" fill="none" stroke="#444" stroke-width="0.55"/><circle cx="595.8" cy="278.5" r="2.8" fill="#fff" stroke="#111" stroke-width="1.15"/><path d="M595.7 277.4v1.2h1.1" fill="none" stroke="#444" stroke-width="0.55"/><circle cx="612.3" cy="278.5" r="2.8" fill="#fff" stroke="#111" stroke-width="1.15"/><path d="M612.2 277.4v1.2h1.1" fill="none" stroke="#444" stroke-width="0.55"/><circle cx="628.1" cy="278.5" r="2.8" fill="#fff" stroke="#111" stroke-width="1.15"/><path d="M628.0 277.4v1.2h1.1" fill="none" stroke="#444" stroke-width="0.55"/><circle cx="643.3" cy="278.5" r="2.8" fill="#fff" stroke="#111" stroke-width="1.15"/><path d="M643.2 277.4v1.2h1.1" fill="none" stroke="#444" stroke-width="0.55"/><circle cx="657.9" cy="278.5" r="2.8" fill="#fff" stroke="#111" stroke-width="1.15"/><path d="M657.8 277.4v1.2h1.1" fill="none" stroke="#444" stroke-width="0.55"/><circle cx="671.9" cy="278.6" r="2.8" fill="#fff" stroke="#111" stroke-width="1.15"/><path d="M671.8 277.5v1.2h1.1" fill="none" stroke="#444" stroke-width="0.55"/><circle cx="685.4" cy="278.6" r="2.8" fill="#fff" stroke="#111" stroke-width="1.15"/><path d="M685.3 277.5v1.2h1.1" fill="none" stroke="#444" stroke-width="0.55"/><circle cx="698.2" cy="278.6" r="2.8" fill="#fff" stroke="#111" stroke-width="1.15"/><path d="M698.1 277.5v1.2h1.1" fill="none" stroke="#444" stroke-width="0.55"/><circle cx="710.4" cy="278.6" r="2.8" fill="#fff" stroke="#111" stroke-width="1.15"/><path d="M710.3 277.5v1.2h1.1" fill="none" stroke="#444" stroke-width="0.55"/><circle cx="722.0" cy="278.6" r="2.8" fill="#fff" stroke="#111" stroke-width="1.15"/><path d="M721.9 277.5v1.2h1.1" fill="none" stroke="#444" stroke-width="0.55"/><circle cx="732.9" cy="278.6" r="2.8" fill="#fff" stroke="#111" stroke-width="1.15"/><path d="M732.8 277.5v1.2h1.1" fill="none" stroke="#444" stroke-width="0.55"/><circle cx="743.3" cy="278.6" r="2.8" fill="#fff" stroke="#111" stroke-width="1.15"/><path d="M743.2 277.5v1.2h1.1" fill="none" stroke="#444" stroke-width="0.55"/><circle cx="753.1" cy="278.7" r="2.8" fill="#fff" stroke="#111" stroke-width="1.15"/><path d="M753.0 277.6v1.2h1.1" fill="none" stroke="#444" stroke-width="0.55"/><circle cx="762.3" cy="278.7" r="2.8" fill="#fff" stroke="#111" stroke-width="1.15"/><path d="M762.2 277.6v1.2h1.1" fill="none" stroke="#444" stroke-width="0.55"/><circle cx="770.8" cy="278.7" r="2.8" fill="#fff" stroke="#111" stroke-width="1.15"/><path d="M770.7 277.6v1.2h1.1" fill="none" stroke="#444" stroke-width="0.55"/><circle cx="778.8" cy="278.7" r="2.8" fill="#fff" stroke="#111" stroke-width="1.15"/><path d="M778.7 277.6v1.2h1.1" fill="none" stroke="#444" stroke-width="0.55"/><circle cx="786.2" cy="278.7" r="2.8" fill="#fff" stroke="#111" stroke-width="1.15"/><path d="M786.1 277.6v1.2h1.1" fill="none" stroke="#444" stroke-width="0.55"/><circle cx="792.9" cy="278.7" r="2.8" fill="#fff" stroke="#111" stroke-width="1.15"/><path d="M792.8 277.6v1.2h1.1" fill="none" stroke="#444" stroke-width="0.55"/><circle cx="799.1" cy="278.8" r="2.8" fill="#fff" stroke="#111" stroke-width="1.15"/><path d="M799.0 277.7v1.2h1.1" fill="none" stroke="#444" stroke-width="0.55"/><circle cx="804.6" cy="278.8" r="2.8" fill="#fff" stroke="#111" stroke-width="1.15"/><path d="M804.5 277.7v1.2h1.1" fill="none" stroke="#444" stroke-width="0.55"/><circle cx="560.9" cy="287.5" r="2.8" fill="#fff" stroke="#111" stroke-width="1.15"/><path d="M560.8 286.4v1.2h1.1" fill="none" stroke="#444" stroke-width="0.55"/><circle cx="578.2" cy="287.4" r="2.8" fill="#fff" stroke="#111" stroke-width="1.15"/><path d="M578.1 286.3v1.2h1.1" fill="none" stroke="#444" stroke-width="0.55"/><circle cx="594.9" cy="287.4" r="2.8" fill="#fff" stroke="#111" stroke-width="1.15"/><path d="M594.8 286.3v1.2h1.1" fill="none" stroke="#444" stroke-width="0.55"/><circle cx="611.0" cy="287.4" r="2.8" fill="#fff" stroke="#111" stroke-width="1.15"/><path d="M610.9 286.3v1.2h1.1" fill="none" stroke="#444" stroke-width="0.55"/><circle cx="626.5" cy="287.4" r="2.8" fill="#fff" stroke="#111" stroke-width="1.15"/><path d="M626.4 286.3v1.2h1.1" fill="none" stroke="#444" stroke-width="0.55"/><circle cx="641.4" cy="287.3" r="2.8" fill="#fff" stroke="#111" stroke-width="1.15"/><path d="M641.3 286.2v1.2h1.1" fill="none" stroke="#444" stroke-width="0.55"/><circle cx="655.7" cy="287.3" r="2.8" fill="#fff" stroke="#111" stroke-width="1.15"/><path d="M655.6 286.2v1.2h1.1" fill="none" stroke="#444" stroke-width="0.55"/><circle cx="669.4" cy="287.3" r="2.8" fill="#fff" stroke="#111" stroke-width="1.15"/><path d="M669.3 286.2v1.2h1.1" fill="none" stroke="#444" stroke-width="0.55"/><circle cx="682.5" cy="287.3" r="2.8" fill="#fff" stroke="#111" stroke-width="1.15"/><path d="M682.4 286.2v1.2h1.1" fill="none" stroke="#444" stroke-width="0.55"/><circle cx="695.1" cy="287.2" r="2.8" fill="#fff" stroke="#111" stroke-width="1.15"/><path d="M695.0 286.1v1.2h1.1" fill="none" stroke="#444" stroke-width="0.55"/><circle cx="707.0" cy="287.2" r="2.8" fill="#fff" stroke="#111" stroke-width="1.15"/><path d="M706.9 286.1v1.2h1.1" fill="none" stroke="#444" stroke-width="0.55"/><circle cx="718.4" cy="287.2" r="2.8" fill="#fff" stroke="#111" stroke-width="1.15"/><path d="M718.3 286.1v1.2h1.1" fill="none" stroke="#444" stroke-width="0.55"/><circle cx="729.1" cy="287.2" r="2.8" fill="#fff" stroke="#111" stroke-width="1.15"/><path d="M729.0 286.1v1.2h1.1" fill="none" stroke="#444" stroke-width="0.55"/><circle cx="739.3" cy="287.1" r="2.8" fill="#fff" stroke="#111" stroke-width="1.15"/><path d="M739.2 286.0v1.2h1.1" fill="none" stroke="#444" stroke-width="0.55"/><circle cx="748.9" cy="287.1" r="2.8" fill="#fff" stroke="#111" stroke-width="1.15"/><path d="M748.8 286.0v1.2h1.1" fill="none" stroke="#444" stroke-width="0.55"/><circle cx="757.8" cy="287.1" r="2.8" fill="#fff" stroke="#111" stroke-width="1.15"/><path d="M757.7 286.0v1.2h1.1" fill="none" stroke="#444" stroke-width="0.55"/><circle cx="766.2" cy="287.1" r="2.8" fill="#fff" stroke="#111" stroke-width="1.15"/><path d="M766.1 286.0v1.2h1.1" fill="none" stroke="#444" stroke-width="0.55"/><circle cx="774.0" cy="287.1" r="2.8" fill="#fff" stroke="#111" stroke-width="1.15"/><path d="M773.9 286.0v1.2h1.1" fill="none" stroke="#444" stroke-width="0.55"/><circle cx="781.2" cy="287.0" r="2.8" fill="#fff" stroke="#111" stroke-width="1.15"/><path d="M781.1 285.9v1.2h1.1" fill="none" stroke="#444" stroke-width="0.55"/><circle cx="787.8" cy="287.0" r="2.8" fill="#fff" stroke="#111" stroke-width="1.15"/><path d="M787.7 285.9v1.2h1.1" fill="none" stroke="#444" stroke-width="0.55"/><circle cx="793.9" cy="287.0" r="2.8" fill="#fff" stroke="#111" stroke-width="1.15"/><path d="M793.8 285.9v1.2h1.1" fill="none" stroke="#444" stroke-width="0.55"/><circle cx="799.3" cy="287.0" r="2.8" fill="#fff" stroke="#111" stroke-width="1.15"/><path d="M799.2 285.9v1.2h1.1" fill="none" stroke="#444" stroke-width="0.55"/><circle cx="804.1" cy="286.9" r="2.8" fill="#fff" stroke="#111" stroke-width="1.15"/><path d="M804.0 285.8v1.2h1.1" fill="none" stroke="#444" stroke-width="0.55"/><circle cx="564.0" cy="297.8" r="2.8" fill="#fff" stroke="#111" stroke-width="1.15"/><path d="M563.9 296.7v1.2h1.1" fill="none" stroke="#444" stroke-width="0.55"/><circle cx="580.7" cy="297.8" r="2.8" fill="#fff" stroke="#111" stroke-width="1.15"/><path d="M580.6 296.7v1.2h1.1" fill="none" stroke="#444" stroke-width="0.55"/><circle cx="596.9" cy="297.7" r="2.8" fill="#fff" stroke="#111" stroke-width="1.15"/><path d="M596.8 296.6v1.2h1.1" fill="none" stroke="#444" stroke-width="0.55"/><circle cx="612.5" cy="297.7" r="2.8" fill="#fff" stroke="#111" stroke-width="1.15"/><path d="M612.4 296.6v1.2h1.1" fill="none" stroke="#444" stroke-width="0.55"/><circle cx="627.5" cy="297.7" r="2.8" fill="#fff" stroke="#111" stroke-width="1.15"/><path d="M627.4 296.6v1.2h1.1" fill="none" stroke="#444" stroke-width="0.55"/><circle cx="641.9" cy="297.6" r="2.8" fill="#fff" stroke="#111" stroke-width="1.15"/><path d="M641.8 296.5v1.2h1.1" fill="none" stroke="#444" stroke-width="0.55"/><circle cx="655.8" cy="297.5" r="2.8" fill="#fff" stroke="#111" stroke-width="1.15"/><path d="M655.7 296.4v1.2h1.1" fill="none" stroke="#444" stroke-width="0.55"/><circle cx="669.1" cy="297.4" r="2.8" fill="#fff" stroke="#111" stroke-width="1.15"/><path d="M669.0 296.3v1.2h1.1" fill="none" stroke="#444" stroke-width="0.55"/><circle cx="681.8" cy="297.3" r="2.8" fill="#fff" stroke="#111" stroke-width="1.15"/><path d="M681.7 296.2v1.2h1.1" fill="none" stroke="#444" stroke-width="0.55"/><circle cx="693.9" cy="297.2" r="2.8" fill="#fff" stroke="#111" stroke-width="1.15"/><path d="M693.8 296.1v1.2h1.1" fill="none" stroke="#444" stroke-width="0.55"/><circle cx="705.5" cy="297.1" r="2.8" fill="#fff" stroke="#111" stroke-width="1.15"/><path d="M705.4 296.0v1.2h1.1" fill="none" stroke="#444" stroke-width="0.55"/><circle cx="716.5" cy="297.0" r="2.8" fill="#fff" stroke="#111" stroke-width="1.15"/><path d="M716.4 295.9v1.2h1.1" fill="none" stroke="#444" stroke-width="0.55"/><circle cx="726.9" cy="296.8" r="2.8" fill="#fff" stroke="#111" stroke-width="1.15"/><path d="M726.8 295.7v1.2h1.1" fill="none" stroke="#444" stroke-width="0.55"/><circle cx="736.8" cy="296.7" r="2.8" fill="#fff" stroke="#111" stroke-width="1.15"/><path d="M736.7 295.6v1.2h1.1" fill="none" stroke="#444" stroke-width="0.55"/><circle cx="746.1" cy="296.5" r="2.8" fill="#fff" stroke="#111" stroke-width="1.15"/><path d="M746.0 295.4v1.2h1.1" fill="none" stroke="#444" stroke-width="0.55"/><circle cx="754.8" cy="296.3" r="2.8" fill="#fff" stroke="#111" stroke-width="1.15"/><path d="M754.7 295.2v1.2h1.1" fill="none" stroke="#444" stroke-width="0.55"/><circle cx="762.9" cy="296.1" r="2.8" fill="#fff" stroke="#111" stroke-width="1.15"/><path d="M762.8 295.0v1.2h1.1" fill="none" stroke="#444" stroke-width="0.55"/><circle cx="770.4" cy="295.9" r="2.8" fill="#fff" stroke="#111" stroke-width="1.15"/><path d="M770.3 294.8v1.2h1.1" fill="none" stroke="#444" stroke-width="0.55"/><circle cx="777.4" cy="295.7" r="2.8" fill="#fff" stroke="#111" stroke-width="1.15"/><path d="M777.3 294.6v1.2h1.1" fill="none" stroke="#444" stroke-width="0.55"/><circle cx="783.8" cy="295.5" r="2.8" fill="#fff" stroke="#111" stroke-width="1.15"/><path d="M783.7 294.4v1.2h1.1" fill="none" stroke="#444" stroke-width="0.55"/><circle cx="789.7" cy="295.2" r="2.8" fill="#fff" stroke="#111" stroke-width="1.15"/><path d="M789.6 294.1v1.2h1.1" fill="none" stroke="#444" stroke-width="0.55"/><circle cx="794.9" cy="295.0" r="2.8" fill="#fff" stroke="#111" stroke-width="1.15"/><path d="M794.8 293.9v1.2h1.1" fill="none" stroke="#444" stroke-width="0.55"/><circle cx="565.6" cy="307.2" r="2.8" fill="#fff" stroke="#111" stroke-width="1.15"/><path d="M565.5 306.1v1.2h1.1" fill="none" stroke="#444" stroke-width="0.55"/><circle cx="581.7" cy="307.2" r="2.8" fill="#fff" stroke="#111" stroke-width="1.15"/><path d="M581.6 306.1v1.2h1.1" fill="none" stroke="#444" stroke-width="0.55"/><circle cx="597.3" cy="307.1" r="2.8" fill="#fff" stroke="#111" stroke-width="1.15"/><path d="M597.2 306.0v1.2h1.1" fill="none" stroke="#444" stroke-width="0.55"/><circle cx="612.4" cy="307.1" r="2.8" fill="#fff" stroke="#111" stroke-width="1.15"/><path d="M612.3 306.0v1.2h1.1" fill="none" stroke="#444" stroke-width="0.55"/><circle cx="626.8" cy="307.0" r="2.8" fill="#fff" stroke="#111" stroke-width="1.15"/><path d="M626.7 305.9v1.2h1.1" fill="none" stroke="#444" stroke-width="0.55"/><circle cx="640.8" cy="306.9" r="2.8" fill="#fff" stroke="#111" stroke-width="1.15"/><path d="M640.7 305.8v1.2h1.1" fill="none" stroke="#444" stroke-width="0.55"/><circle cx="654.1" cy="306.8" r="2.8" fill="#fff" stroke="#111" stroke-width="1.15"/><path d="M654.0 305.7v1.2h1.1" fill="none" stroke="#444" stroke-width="0.55"/><circle cx="667.0" cy="306.7" r="2.8" fill="#fff" stroke="#111" stroke-width="1.15"/><path d="M666.9 305.6v1.2h1.1" fill="none" stroke="#444" stroke-width="0.55"/><circle cx="679.2" cy="306.5" r="2.8" fill="#fff" stroke="#111" stroke-width="1.15"/><path d="M679.1 305.4v1.2h1.1" fill="none" stroke="#444" stroke-width="0.55"/><circle cx="691.0" cy="306.4" r="2.8" fill="#fff" stroke="#111" stroke-width="1.15"/><path d="M690.9 305.3v1.2h1.1" fill="none" stroke="#444" stroke-width="0.55"/><circle cx="702.1" cy="306.2" r="2.8" fill="#fff" stroke="#111" stroke-width="1.15"/><path d="M702.0 305.1v1.2h1.1" fill="none" stroke="#444" stroke-width="0.55"/><circle cx="712.7" cy="306.0" r="2.8" fill="#fff" stroke="#111" stroke-width="1.15"/><path d="M712.6 304.9v1.2h1.1" fill="none" stroke="#444" stroke-width="0.55"/><circle cx="722.8" cy="305.8" r="2.8" fill="#fff" stroke="#111" stroke-width="1.15"/><path d="M722.7 304.7v1.2h1.1" fill="none" stroke="#444" stroke-width="0.55"/><circle cx="732.3" cy="305.6" r="2.8" fill="#fff" stroke="#111" stroke-width="1.15"/><path d="M732.2 304.5v1.2h1.1" fill="none" stroke="#444" stroke-width="0.55"/><circle cx="741.2" cy="305.4" r="2.8" fill="#fff" stroke="#111" stroke-width="1.15"/><path d="M741.1 304.3v1.2h1.1" fill="none" stroke="#444" stroke-width="0.55"/><circle cx="749.6" cy="305.1" r="2.8" fill="#fff" stroke="#111" stroke-width="1.15"/><path d="M749.5 304.0v1.2h1.1" fill="none" stroke="#444" stroke-width="0.55"/><circle cx="757.5" cy="304.8" r="2.8" fill="#fff" stroke="#111" stroke-width="1.15"/><path d="M757.4 303.7v1.2h1.1" fill="none" stroke="#444" stroke-width="0.55"/><circle cx="764.8" cy="304.6" r="2.8" fill="#fff" stroke="#111" stroke-width="1.15"/><path d="M764.7 303.5v1.2h1.1" fill="none" stroke="#444" stroke-width="0.55"/><circle cx="771.5" cy="304.2" r="2.8" fill="#fff" stroke="#111" stroke-width="1.15"/><path d="M771.4 303.1v1.2h1.1" fill="none" stroke="#444" stroke-width="0.55"/><circle cx="777.7" cy="303.9" r="2.8" fill="#fff" stroke="#111" stroke-width="1.15"/><path d="M777.6 302.8v1.2h1.1" fill="none" stroke="#444" stroke-width="0.55"/><circle cx="783.3" cy="303.6" r="2.8" fill="#fff" stroke="#111" stroke-width="1.15"/><path d="M783.2 302.5v1.2h1.1" fill="none" stroke="#444" stroke-width="0.55"/><circle cx="788.4" cy="303.2" r="2.8" fill="#fff" stroke="#111" stroke-width="1.15"/><path d="M788.3 302.1v1.2h1.1" fill="none" stroke="#444" stroke-width="0.55"/><circle cx="568.7" cy="316.8" r="2.8" fill="#fff" stroke="#111" stroke-width="1.15"/><path d="M568.6 315.7v1.2h1.1" fill="none" stroke="#444" stroke-width="0.55"/><circle cx="584.6" cy="316.8" r="2.8" fill="#fff" stroke="#111" stroke-width="1.15"/><path d="M584.5 315.7v1.2h1.1" fill="none" stroke="#444" stroke-width="0.55"/><circle cx="600.0" cy="316.7" r="2.8" fill="#fff" stroke="#111" stroke-width="1.15"/><path d="M599.9 315.6v1.2h1.1" fill="none" stroke="#444" stroke-width="0.55"/><circle cx="614.8" cy="316.6" r="2.8" fill="#fff" stroke="#111" stroke-width="1.15"/><path d="M614.7 315.5v1.2h1.1" fill="none" stroke="#444" stroke-width="0.55"/><circle cx="629.0" cy="316.5" r="2.8" fill="#fff" stroke="#111" stroke-width="1.15"/><path d="M628.9 315.4v1.2h1.1" fill="none" stroke="#444" stroke-width="0.55"/><circle cx="642.7" cy="316.4" r="2.8" fill="#fff" stroke="#111" stroke-width="1.15"/><path d="M642.6 315.3v1.2h1.1" fill="none" stroke="#444" stroke-width="0.55"/><circle cx="655.8" cy="316.3" r="2.8" fill="#fff" stroke="#111" stroke-width="1.15"/><path d="M655.7 315.2v1.2h1.1" fill="none" stroke="#444" stroke-width="0.55"/><circle cx="668.3" cy="316.1" r="2.8" fill="#fff" stroke="#111" stroke-width="1.15"/><path d="M668.2 315.0v1.2h1.1" fill="none" stroke="#444" stroke-width="0.55"/><circle cx="680.2" cy="315.9" r="2.8" fill="#fff" stroke="#111" stroke-width="1.15"/><path d="M680.1 314.8v1.2h1.1" fill="none" stroke="#444" stroke-width="0.55"/><circle cx="691.6" cy="315.7" r="2.8" fill="#fff" stroke="#111" stroke-width="1.15"/><path d="M691.5 314.6v1.2h1.1" fill="none" stroke="#444" stroke-width="0.55"/><circle cx="702.4" cy="315.4" r="2.8" fill="#fff" stroke="#111" stroke-width="1.15"/><path d="M702.3 314.3v1.2h1.1" fill="none" stroke="#444" stroke-width="0.55"/><circle cx="712.6" cy="315.2" r="2.8" fill="#fff" stroke="#111" stroke-width="1.15"/><path d="M712.5 314.1v1.2h1.1" fill="none" stroke="#444" stroke-width="0.55"/><circle cx="722.3" cy="314.9" r="2.8" fill="#fff" stroke="#111" stroke-width="1.15"/><path d="M722.2 313.8v1.2h1.1" fill="none" stroke="#444" stroke-width="0.55"/><circle cx="731.3" cy="314.6" r="2.8" fill="#fff" stroke="#111" stroke-width="1.15"/><path d="M731.2 313.5v1.2h1.1" fill="none" stroke="#444" stroke-width="0.55"/><circle cx="739.8" cy="314.3" r="2.8" fill="#fff" stroke="#111" stroke-width="1.15"/><path d="M739.7 313.2v1.2h1.1" fill="none" stroke="#444" stroke-width="0.55"/><circle cx="747.8" cy="313.9" r="2.8" fill="#fff" stroke="#111" stroke-width="1.15"/><path d="M747.7 312.8v1.2h1.1" fill="none" stroke="#444" stroke-width="0.55"/><circle cx="755.1" cy="313.6" r="2.8" fill="#fff" stroke="#111" stroke-width="1.15"/><path d="M755.0 312.5v1.2h1.1" fill="none" stroke="#444" stroke-width="0.55"/><circle cx="761.9" cy="313.2" r="2.8" fill="#fff" stroke="#111" stroke-width="1.15"/><path d="M761.8 312.1v1.2h1.1" fill="none" stroke="#444" stroke-width="0.55"/><circle cx="768.1" cy="312.8" r="2.8" fill="#fff" stroke="#111" stroke-width="1.15"/><path d="M768.0 311.7v1.2h1.1" fill="none" stroke="#444" stroke-width="0.55"/><circle cx="773.8" cy="312.3" r="2.8" fill="#fff" stroke="#111" stroke-width="1.15"/><path d="M773.7 311.2v1.2h1.1" fill="none" stroke="#444" stroke-width="0.55"/><circle cx="778.8" cy="311.9" r="2.8" fill="#fff" stroke="#111" stroke-width="1.15"/><path d="M778.7 310.8v1.2h1.1" fill="none" stroke="#444" stroke-width="0.55"/><circle cx="571.3" cy="325.8" r="2.8" fill="#fff" stroke="#111" stroke-width="1.15"/><path d="M571.2 324.7v1.2h1.1" fill="none" stroke="#444" stroke-width="0.55"/><circle cx="586.7" cy="325.8" r="2.8" fill="#fff" stroke="#111" stroke-width="1.15"/><path d="M586.6 324.7v1.2h1.1" fill="none" stroke="#444" stroke-width="0.55"/><circle cx="601.6" cy="325.7" r="2.8" fill="#fff" stroke="#111" stroke-width="1.15"/><path d="M601.5 324.6v1.2h1.1" fill="none" stroke="#444" stroke-width="0.55"/><circle cx="615.9" cy="325.6" r="2.8" fill="#fff" stroke="#111" stroke-width="1.15"/><path d="M615.8 324.5v1.2h1.1" fill="none" stroke="#444" stroke-width="0.55"/><circle cx="629.6" cy="325.5" r="2.8" fill="#fff" stroke="#111" stroke-width="1.15"/><path d="M629.5 324.4v1.2h1.1" fill="none" stroke="#444" stroke-width="0.55"/><circle cx="642.8" cy="325.3" r="2.8" fill="#fff" stroke="#111" stroke-width="1.15"/><path d="M642.7 324.2v1.2h1.1" fill="none" stroke="#444" stroke-width="0.55"/><circle cx="655.3" cy="325.2" r="2.8" fill="#fff" stroke="#111" stroke-width="1.15"/><path d="M655.2 324.1v1.2h1.1" fill="none" stroke="#444" stroke-width="0.55"/><circle cx="667.3" cy="324.9" r="2.8" fill="#fff" stroke="#111" stroke-width="1.15"/><path d="M667.2 323.8v1.2h1.1" fill="none" stroke="#444" stroke-width="0.55"/><circle cx="678.7" cy="324.7" r="2.8" fill="#fff" stroke="#111" stroke-width="1.15"/><path d="M678.6 323.6v1.2h1.1" fill="none" stroke="#444" stroke-width="0.55"/><circle cx="689.5" cy="324.4" r="2.8" fill="#fff" stroke="#111" stroke-width="1.15"/><path d="M689.4 323.3v1.2h1.1" fill="none" stroke="#444" stroke-width="0.55"/><circle cx="699.7" cy="324.1" r="2.8" fill="#fff" stroke="#111" stroke-width="1.15"/><path d="M699.6 323.0v1.2h1.1" fill="none" stroke="#444" stroke-width="0.55"/><circle cx="709.3" cy="323.8" r="2.8" fill="#fff" stroke="#111" stroke-width="1.15"/><path d="M709.2 322.7v1.2h1.1" fill="none" stroke="#444" stroke-width="0.55"/><circle cx="718.4" cy="323.4" r="2.8" fill="#fff" stroke="#111" stroke-width="1.15"/><path d="M718.3 322.3v1.2h1.1" fill="none" stroke="#444" stroke-width="0.55"/><circle cx="726.8" cy="323.0" r="2.8" fill="#fff" stroke="#111" stroke-width="1.15"/><path d="M726.7 321.9v1.2h1.1" fill="none" stroke="#444" stroke-width="0.55"/><circle cx="734.7" cy="322.6" r="2.8" fill="#fff" stroke="#111" stroke-width="1.15"/><path d="M734.6 321.5v1.2h1.1" fill="none" stroke="#444" stroke-width="0.55"/><circle cx="742.0" cy="322.2" r="2.8" fill="#fff" stroke="#111" stroke-width="1.15"/><path d="M741.9 321.1v1.2h1.1" fill="none" stroke="#444" stroke-width="0.55"/><circle cx="748.7" cy="321.7" r="2.8" fill="#fff" stroke="#111" stroke-width="1.15"/><path d="M748.6 320.6v1.2h1.1" fill="none" stroke="#444" stroke-width="0.55"/><circle cx="754.8" cy="321.2" r="2.8" fill="#fff" stroke="#111" stroke-width="1.15"/><path d="M754.7 320.1v1.2h1.1" fill="none" stroke="#444" stroke-width="0.55"/><circle cx="760.4" cy="320.7" r="2.8" fill="#fff" stroke="#111" stroke-width="1.15"/><path d="M760.3 319.6v1.2h1.1" fill="none" stroke="#444" stroke-width="0.55"/><circle cx="765.4" cy="320.1" r="2.8" fill="#fff" stroke="#111" stroke-width="1.15"/><path d="M765.3 319.0v1.2h1.1" fill="none" stroke="#444" stroke-width="0.55"/><circle cx="557.0" cy="334.9" r="2.8" fill="#fff" stroke="#111" stroke-width="1.15"/><path d="M556.9 333.8v1.2h1.1" fill="none" stroke="#444" stroke-width="0.55"/><circle cx="572.7" cy="334.9" r="2.8" fill="#fff" stroke="#111" stroke-width="1.15"/><path d="M572.6 333.8v1.2h1.1" fill="none" stroke="#444" stroke-width="0.55"/><circle cx="587.8" cy="334.8" r="2.8" fill="#fff" stroke="#111" stroke-width="1.15"/><path d="M587.7 333.7v1.2h1.1" fill="none" stroke="#444" stroke-width="0.55"/><circle cx="602.2" cy="334.8" r="2.8" fill="#fff" stroke="#111" stroke-width="1.15"/><path d="M602.1 333.7v1.2h1.1" fill="none" stroke="#444" stroke-width="0.55"/><circle cx="616.0" cy="334.6" r="2.8" fill="#fff" stroke="#111" stroke-width="1.15"/><path d="M615.9 333.5v1.2h1.1" fill="none" stroke="#444" stroke-width="0.55"/><circle cx="629.2" cy="334.5" r="2.8" fill="#fff" stroke="#111" stroke-width="1.15"/><path d="M629.1 333.4v1.2h1.1" fill="none" stroke="#444" stroke-width="0.55"/><circle cx="641.7" cy="334.3" r="2.8" fill="#fff" stroke="#111" stroke-width="1.15"/><path d="M641.6 333.2v1.2h1.1" fill="none" stroke="#444" stroke-width="0.55"/><circle cx="653.6" cy="334.0" r="2.8" fill="#fff" stroke="#111" stroke-width="1.15"/><path d="M653.5 332.9v1.2h1.1" fill="none" stroke="#444" stroke-width="0.55"/><circle cx="664.9" cy="333.8" r="2.8" fill="#fff" stroke="#111" stroke-width="1.15"/><path d="M664.8 332.7v1.2h1.1" fill="none" stroke="#444" stroke-width="0.55"/><circle cx="675.5" cy="333.5" r="2.8" fill="#fff" stroke="#111" stroke-width="1.15"/><path d="M675.4 332.4v1.2h1.1" fill="none" stroke="#444" stroke-width="0.55"/><circle cx="685.5" cy="333.2" r="2.8" fill="#fff" stroke="#111" stroke-width="1.15"/><path d="M685.4 332.1v1.2h1.1" fill="none" stroke="#444" stroke-width="0.55"/><circle cx="694.9" cy="332.8" r="2.8" fill="#fff" stroke="#111" stroke-width="1.15"/><path d="M694.8 331.7v1.2h1.1" fill="none" stroke="#444" stroke-width="0.55"/><circle cx="703.6" cy="332.4" r="2.8" fill="#fff" stroke="#111" stroke-width="1.15"/><path d="M703.5 331.3v1.2h1.1" fill="none" stroke="#444" stroke-width="0.55"/><circle cx="711.7" cy="331.9" r="2.8" fill="#fff" stroke="#111" stroke-width="1.15"/><path d="M711.6 330.8v1.2h1.1" fill="none" stroke="#444" stroke-width="0.55"/><circle cx="719.2" cy="331.5" r="2.8" fill="#fff" stroke="#111" stroke-width="1.15"/><path d="M719.1 330.4v1.2h1.1" fill="none" stroke="#444" stroke-width="0.55"/><circle cx="726.0" cy="331.0" r="2.8" fill="#fff" stroke="#111" stroke-width="1.15"/><path d="M725.9 329.9v1.2h1.1" fill="none" stroke="#444" stroke-width="0.55"/><circle cx="732.3" cy="330.4" r="2.8" fill="#fff" stroke="#111" stroke-width="1.15"/><path d="M732.2 329.3v1.2h1.1" fill="none" stroke="#444" stroke-width="0.55"/><circle cx="737.8" cy="329.8" r="2.8" fill="#fff" stroke="#111" stroke-width="1.15"/><path d="M737.7 328.7v1.2h1.1" fill="none" stroke="#444" stroke-width="0.55"/><circle cx="742.8" cy="329.2" r="2.8" fill="#fff" stroke="#111" stroke-width="1.15"/><path d="M742.7 328.1v1.2h1.1" fill="none" stroke="#444" stroke-width="0.55"/><circle cx="815.4" cy="238.1" r="2.8" fill="#fff" stroke="#ff1a1a" stroke-width="1.4"/><path d="M815.3 237.0v1.2h1.1" fill="none" stroke="#444" stroke-width="0.55"/><circle cx="783.3" cy="311.4" r="2.8" fill="#fff" stroke="#ff1a1a" stroke-width="1.4"/><path d="M783.2 310.3v1.2h1.1" fill="none" stroke="#444" stroke-width="0.55"/><circle cx="553.4" cy="338.5" r="2.8" fill="#fff" stroke="#ff1a1a" stroke-width="1.4"/><path d="M553.3 337.4v1.2h1.1" fill="none" stroke="#444" stroke-width="0.55"/><circle cx="572.2" cy="339.2" r="2.8" fill="#fff" stroke="#ff1a1a" stroke-width="1.4"/><path d="M572.1 338.1v1.2h1.1" fill="none" stroke="#444" stroke-width="0.55"/><circle cx="590.3" cy="339.9" r="2.8" fill="#fff" stroke="#ff1a1a" stroke-width="1.4"/><path d="M590.2 338.8v1.2h1.1" fill="none" stroke="#444" stroke-width="0.55"/><circle cx="607.7" cy="340.5" r="2.8" fill="#fff" stroke="#ff1a1a" stroke-width="1.4"/><path d="M607.6 339.4v1.2h1.1" fill="none" stroke="#444" stroke-width="0.55"/><circle cx="624.3" cy="340.9" r="2.8" fill="#fff" stroke="#ff1a1a" stroke-width="1.4"/><path d="M624.2 339.8v1.2h1.1" fill="none" stroke="#444" stroke-width="0.55"/><circle cx="640.2" cy="341.2" r="2.8" fill="#fff" stroke="#ff1a1a" stroke-width="1.4"/><path d="M640.1 340.1v1.2h1.1" fill="none" stroke="#444" stroke-width="0.55"/><circle cx="655.4" cy="341.2" r="2.8" fill="#fff" stroke="#ff1a1a" stroke-width="1.4"/><path d="M655.3 340.1v1.2h1.1" fill="none" stroke="#444" stroke-width="0.55"/><circle cx="669.9" cy="341.0" r="2.8" fill="#fff" stroke="#ff1a1a" stroke-width="1.4"/><path d="M669.8 339.9v1.2h1.1" fill="none" stroke="#444" stroke-width="0.55"/><circle cx="683.7" cy="340.6" r="2.8" fill="#fff" stroke="#ff1a1a" stroke-width="1.4"/><path d="M683.6 339.5v1.2h1.1" fill="none" stroke="#444" stroke-width="0.55"/><circle cx="696.7" cy="339.8" r="2.8" fill="#fff" stroke="#ff1a1a" stroke-width="1.4"/><path d="M696.6 338.7v1.2h1.1" fill="none" stroke="#444" stroke-width="0.55"/><circle cx="709.1" cy="338.6" r="2.8" fill="#fff" stroke="#ff1a1a" stroke-width="1.4"/><path d="M709.0 337.5v1.2h1.1" fill="none" stroke="#444" stroke-width="0.55"/><circle cx="720.7" cy="337.1" r="2.8" fill="#fff" stroke="#ff1a1a" stroke-width="1.4"/><path d="M720.6 336.0v1.2h1.1" fill="none" stroke="#444" stroke-width="0.55"/><circle cx="731.6" cy="335.1" r="2.8" fill="#fff" stroke="#ff1a1a" stroke-width="1.4"/><path d="M731.5 334.0v1.2h1.1" fill="none" stroke="#444" stroke-width="0.55"/><circle cx="741.8" cy="332.8" r="2.8" fill="#fff" stroke="#ff1a1a" stroke-width="1.4"/><path d="M741.7 331.7v1.2h1.1" fill="none" stroke="#444" stroke-width="0.55"/><circle cx="751.2" cy="330.0" r="2.8" fill="#fff" stroke="#ff1a1a" stroke-width="1.4"/><path d="M751.1 328.9v1.2h1.1" fill="none" stroke="#444" stroke-width="0.55"/><circle cx="760.0" cy="326.7" r="2.8" fill="#fff" stroke="#ff1a1a" stroke-width="1.4"/><path d="M759.9 325.6v1.2h1.1" fill="none" stroke="#444" stroke-width="0.55"/><circle cx="768.0" cy="322.9" r="2.8" fill="#fff" stroke="#ff1a1a" stroke-width="1.4"/><path d="M767.9 321.8v1.2h1.1" fill="none" stroke="#444" stroke-width="0.55"/><circle cx="775.3" cy="318.7" r="2.8" fill="#fff" stroke="#ff1a1a" stroke-width="1.4"/><path d="M775.2 317.6v1.2h1.1" fill="none" stroke="#444" stroke-width="0.55"/><circle cx="781.9" cy="313.9" r="2.8" fill="#fff" stroke="#ff1a1a" stroke-width="1.4"/><path d="M781.8 312.8v1.2h1.1" fill="none" stroke="#444" stroke-width="0.55"/><circle cx="787.8" cy="308.7" r="2.8" fill="#fff" stroke="#ff1a1a" stroke-width="1.4"/><path d="M787.7 307.6v1.2h1.1" fill="none" stroke="#444" stroke-width="0.55"/><circle cx="792.9" cy="302.9" r="2.8" fill="#fff" stroke="#ff1a1a" stroke-width="1.4"/><path d="M792.8 301.8v1.2h1.1" fill="none" stroke="#444" stroke-width="0.55"/><circle cx="554.3" cy="258.9" r="2.8" fill="#fff" stroke="#16e6ee" stroke-width="1.4"/><path d="M554.2 257.8v1.2h1.1" fill="none" stroke="#444" stroke-width="0.55"/><circle cx="814.1" cy="262.5" r="2.8" fill="#fff" stroke="#16e6ee" stroke-width="1.4"/><path d="M814.0 261.4v1.2h1.1" fill="none" stroke="#444" stroke-width="0.55"/><circle cx="548.5" cy="268.8" r="2.8" fill="#fff" stroke="#16e6ee" stroke-width="1.4"/><path d="M548.4 267.7v1.2h1.1" fill="none" stroke="#444" stroke-width="0.55"/><circle cx="811.7" cy="270.6" r="2.8" fill="#fff" stroke="#16e6ee" stroke-width="1.4"/><path d="M811.6 269.5v1.2h1.1" fill="none" stroke="#444" stroke-width="0.55"/><circle cx="542.9" cy="278.4" r="2.8" fill="#fff" stroke="#16e6ee" stroke-width="1.4"/><path d="M542.8 277.3v1.2h1.1" fill="none" stroke="#444" stroke-width="0.55"/><circle cx="809.6" cy="278.8" r="2.8" fill="#fff" stroke="#16e6ee" stroke-width="1.4"/><path d="M809.5 277.7v1.2h1.1" fill="none" stroke="#444" stroke-width="0.55"/><circle cx="543.1" cy="287.5" r="2.8" fill="#fff" stroke="#16e6ee" stroke-width="1.4"/><path d="M543.0 286.4v1.2h1.1" fill="none" stroke="#444" stroke-width="0.55"/><circle cx="546.7" cy="297.8" r="2.8" fill="#fff" stroke="#16e6ee" stroke-width="1.4"/><path d="M546.6 296.7v1.2h1.1" fill="none" stroke="#444" stroke-width="0.55"/><circle cx="799.6" cy="294.7" r="2.8" fill="#fff" stroke="#16e6ee" stroke-width="1.4"/><path d="M799.5 293.6v1.2h1.1" fill="none" stroke="#444" stroke-width="0.55"/><circle cx="548.9" cy="307.2" r="2.8" fill="#fff" stroke="#16e6ee" stroke-width="1.4"/><path d="M548.8 306.1v1.2h1.1" fill="none" stroke="#444" stroke-width="0.55"/><circle cx="792.9" cy="302.9" r="2.8" fill="#fff" stroke="#16e6ee" stroke-width="1.4"/><path d="M792.8 301.8v1.2h1.1" fill="none" stroke="#444" stroke-width="0.55"/><circle cx="552.1" cy="316.8" r="2.8" fill="#fff" stroke="#16e6ee" stroke-width="1.4"/><path d="M552.0 315.7v1.2h1.1" fill="none" stroke="#444" stroke-width="0.55"/><circle cx="555.2" cy="325.9" r="2.8" fill="#fff" stroke="#16e6ee" stroke-width="1.4"/><path d="M555.1 324.8v1.2h1.1" fill="none" stroke="#444" stroke-width="0.55"/><circle cx="769.7" cy="319.5" r="2.8" fill="#fff" stroke="#16e6ee" stroke-width="1.4"/><path d="M769.6 318.4v1.2h1.1" fill="none" stroke="#444" stroke-width="0.55"/><circle cx="747.1" cy="328.6" r="2.8" fill="#fff" stroke="#16e6ee" stroke-width="1.4"/><path d="M747.0 327.5v1.2h1.1" fill="none" stroke="#444" stroke-width="0.55"/><circle cx="524.4" cy="232.1" r="2.8" fill="#fff" stroke="#111" stroke-width="1.2"/><path d="M524.3 231.0v1.2h1.1" fill="none" stroke="#444" stroke-width="0.55"/><path d="M77.5 843V872.5L53.5 870M77.5 872.5L58.5 876.5" fill="none" stroke="#55595e" stroke-width="1"/><path d="M80 837.5h6l-6 6.3h6.3M57 864l5.5 6.5M62.5 864l-5.5 6.5M61.5 868.5l3 4.5l3-4.5M64.5 873l-2 5" fill="none" stroke="#55595e" stroke-width="0.9"/></g></svg><div class="t" style="left:50.7px;top:915.81px;font-size:11.8px;color:#222;font-weight:normal;letter-spacing:-0.213px;">Perspective</div><div class="t" style="left:125.0px;top:915.81px;font-size:11.8px;color:#6e7480;font-weight:normal;letter-spacing:0.325px;">Top</div><div class="t" style="left:160.0px;top:915.81px;font-size:11.8px;color:#6e7480;font-weight:normal;letter-spacing:0.032px;">Front</div><div class="t" style="left:203.0px;top:915.81px;font-size:11.8px;color:#6e7480;font-weight:normal;letter-spacing:0.091px;">Right</div><svg style="left:246px;top:915px" width="10" height="10"><path d="M3.5 0.5h3v3h3v3h-3v3h-3v-3h-3v-3h3z" fill="none" stroke="#777" stroke-width="1"/></svg><div class="r" style="left:41px;top:131px;width:91px;height:18px;background:#6aa1fb;border-radius:0 0 2px 0;"></div><div class="t" style="left:48.5px;top:134.47px;font-size:12.2px;color:#1a1a1a;font-weight:normal;letter-spacing:0.088px;-webkit-text-stroke:0.3px #1a1a1a;">Perspective</div><div class="r" style="left:121px;top:133px;width:1px;height:15px;background:#222;"></div><svg style="left:124px;top:138px" width="8" height="5"><path d="M0 0h7l-3.5 4z" fill="#222"/></svg><div class="r" style="left:0px;top:932px;width:46px;height:19px;background:#e9eaee;border-radius:0 4px 0 0;"></div><div class="r" style="left:0px;top:951px;width:1878px;height:53px;background:#e9eaee;"></div><div class="t" style="left:3.4px;top:937.81px;font-size:11.8px;color:#222;font-weight:normal;letter-spacing:-0.233px;">Osnap</div><div class="t" style="left:57.5px;top:937.81px;font-size:11.8px;color:#6e7480;font-weight:normal;letter-spacing:-0.085px;">Selection Filters</div><div class="r" style="left:-5.0px;top:956px;width:13.5px;height:13px;border:1px solid #bcc5d9;background:#fff;box-sizing:border-box"></div><div class="t" style="left:15.4px;top:957.81px;font-size:11.8px;color:#222;font-weight:normal;letter-spacing:-0.798px;">End</div><div class="r" style="left:44.5px;top:956px;width:13.5px;height:13px;border:1px solid #bcc5d9;background:#fff;box-sizing:border-box"></div><div class="t" style="left:63.4px;top:957.81px;font-size:11.8px;color:#222;font-weight:normal;letter-spacing:-0.244px;">Near</div><div class="r" style="left:97.6px;top:956px;width:13.5px;height:13px;border:1px solid #bcc5d9;background:#fff;box-sizing:border-box"></div><div class="t" style="left:116.4px;top:957.81px;font-size:11.8px;color:#222;font-weight:normal;letter-spacing:0.101px;">Point</div><div class="r" style="left:153.4px;top:956px;width:13.5px;height:13px;border:1px solid #bcc5d9;background:#fff;box-sizing:border-box"></div><div class="t" style="left:172.0px;top:957.81px;font-size:11.8px;color:#222;font-weight:normal;letter-spacing:0.496px;">Mid</div><div class="r" style="left:202.7px;top:956px;width:13.5px;height:13px;border:1px solid #bcc5d9;background:#fff;box-sizing:border-box"></div><div class="t" style="left:221.6px;top:957.81px;font-size:11.8px;color:#222;font-weight:normal;letter-spacing:-0.615px;">Cen</div><div class="r" style="left:251.7px;top:956px;width:13.5px;height:13px;border:1px solid #bcc5d9;background:#fff;box-sizing:border-box"></div><svg style="left:253.7px;top:958px" width="10" height="10"><path d="M1 4.8l3.2 3.4l5-7" fill="none" stroke="#222" stroke-width="1.7"/></svg><div class="t" style="left:270.0px;top:957.81px;font-size:11.8px;color:#222;font-weight:normal;letter-spacing:0.161px;">Int</div><div class="r" style="left:293.4px;top:956px;width:13.5px;height:13px;border:1px solid #bcc5d9;background:#fff;box-sizing:border-box"></div><div class="t" style="left:311.8px;top:957.81px;font-size:11.8px;color:#222;font-weight:normal;letter-spacing:-0.081px;">Perp</div><div class="r" style="left:345.2px;top:956px;width:13.5px;height:13px;border:1px solid #bcc5d9;background:#fff;box-sizing:border-box"></div><div class="t" style="left:363.6px;top:957.81px;font-size:11.8px;color:#222;font-weight:normal;letter-spacing:0.059px;">Tan</div><div class="r" style="left:392.3px;top:956px;width:13.5px;height:13px;border:1px solid #bcc5d9;background:#fff;box-sizing:border-box"></div><div class="t" style="left:411.0px;top:957.81px;font-size:11.8px;color:#222;font-weight:normal;letter-spacing:0.034px;">Quad</div><div class="r" style="left:449.5px;top:956px;width:13.5px;height:13px;border:1px solid #bcc5d9;background:#fff;box-sizing:border-box"></div><div class="t" style="left:467.9px;top:957.81px;font-size:11.8px;color:#222;font-weight:normal;letter-spacing:0.157px;">Knot</div><div class="r" style="left:502.4px;top:956px;width:13.5px;height:13px;border:1px solid #bcc5d9;background:#fff;box-sizing:border-box"></div><div class="t" style="left:520.8px;top:957.81px;font-size:11.8px;color:#222;font-weight:normal;letter-spacing:-0.342px;">Vertex</div><div class="r" style="left:561.8px;top:956px;width:13.5px;height:13px;border:1px solid #bcc5d9;background:#fff;box-sizing:border-box"></div><div class="t" style="left:580.2px;top:957.81px;font-size:11.8px;color:#222;font-weight:normal;letter-spacing:-0.032px;">Project</div><div class="r" style="left:634.0px;top:956px;width:13.5px;height:13px;border:1px solid #bcc5d9;background:#fff;box-sizing:border-box"></div><div class="t" style="left:652.7px;top:957.81px;font-size:11.8px;color:#222;font-weight:normal;letter-spacing:-0.150px;">Disable</div><div class="r" style="left:429px;top:986px;width:16px;height:16px;background:#000;"></div><div class="t" style="left:13.7px;top:988.81px;font-size:11.8px;color:#333;font-weight:normal;letter-spacing:-0.450px;">CPlane</div><div class="t" style="left:84.6px;top:988.81px;font-size:11.8px;color:#333;font-weight:normal;letter-spacing:-0.096px;">x -124.781</div><div class="t" style="left:172.0px;top:988.81px;font-size:11.8px;color:#333;font-weight:normal;letter-spacing:-0.203px;">y 368.143</div><div class="t" style="left:275.7px;top:988.81px;font-size:11.8px;color:#333;font-weight:normal;letter-spacing:-0.480px;">z 0</div><div class="t" style="left:363.6px;top:988.81px;font-size:11.8px;color:#333;font-weight:normal;letter-spacing:-0.302px;">Feet</div><div class="t" style="left:451.8px;top:988.81px;font-size:11.8px;color:#333;font-weight:normal;letter-spacing:0.073px;">Default</div><div class="t" style="left:627.4px;top:988.81px;font-size:11.8px;color:#333;font-weight:normal;letter-spacing:-0.114px;">Grid Snap</div><div class="t" style="left:861.0px;top:988.81px;font-size:11.8px;color:#333;font-weight:normal;letter-spacing:-0.253px;">SmartTrack</div><div class="t" style="left:943.3px;top:988.81px;font-size:11.8px;color:#333;font-weight:normal;letter-spacing:-0.192px;">Gumball (CPlane)</div><div class="t" style="left:1074.8px;top:988.81px;font-size:11.8px;color:#333;font-weight:normal;letter-spacing:-0.064px;">Auto CPlane (Object)</div><div class="t" style="left:1210.4px;top:988.81px;font-size:11.8px;color:#333;font-weight:normal;letter-spacing:-0.031px;">Record History</div><div class="t" style="left:1310.9px;top:988.81px;font-size:11.8px;color:#333;font-weight:normal;letter-spacing:-0.087px;">Filter</div><div class="t" style="left:1359.5px;top:988.81px;font-size:11.8px;color:#333;font-weight:normal;letter-spacing:-0.021px;">Absolute tolerance: 0.001</div><div class="r" style="left:691px;top:984px;width:48px;height:19px;background:#d3d9ec;"></div><div class="t" style="left:698.7px;top:988.81px;font-size:11.8px;color:#1f2a44;font-weight:bold;letter-spacing:0.177px;">Ortho</div><div class="r" style="left:742px;top:984px;width:51px;height:19px;background:#d3d9ec;"></div><div class="t" style="left:750.5px;top:988.81px;font-size:11.8px;color:#1f2a44;font-weight:bold;letter-spacing:-0.095px;">Planar</div><div class="r" style="left:796px;top:984px;width:51px;height:19px;background:#d3d9ec;"></div><div class="t" style="left:804.0px;top:988.81px;font-size:11.8px;color:#1f2a44;font-weight:bold;letter-spacing:-0.183px;">Osnap</div><svg style="left:1054px;top:986px" width="11" height="14"><path d="M2.5 6V4a3 3 0 0 1 6 0v2" fill="none" stroke="#999" stroke-width="1.2"/><rect x="1" y="6" width="9" height="7" fill="none" stroke="#999" stroke-width="1.2"/></svg><div class="r" style="left:1870px;top:987px;width:10px;height:17px;background:transparent;border:2px solid #333;box-sizing:border-box;"></div><div class="t" style="left:1694.8px;top:132.81px;font-size:11.8px;color:#6e7480;font-weight:normal;">Properties: Viewport</div><div class="r" style="left:1690px;top:147px;width:180px;height:1px;background:#d5d8e0;"></div><div class="r" style="left:1696px;top:152px;width:28px;height:28px;background:#d3ddf2;"></div><div class="t" style="left:1694.8px;top:198.63px;font-size:13.2px;color:#222;font-weight:normal;letter-spacing:0.336px;">Viewport</div><div class="r" style="left:1694px;top:215px;width:168px;height:1px;background:#d6d9e1;"></div><div class="t" style="left:1710.4px;top:222.01px;font-size:11.8px;color:#222;font-weight:normal;letter-spacing:0.149px;">Title</div><div class="r" style="left:1788px;top:217px;width:74px;height:19.5px;background:#fff;"></div><div class="t" style="left:1792.3px;top:223.01px;font-size:11.8px;color:#222;font-weight:normal;letter-spacing:-0.159px;">Perspective</div><div class="r" style="left:1710px;top:237px;width:152px;height:1px;background:#d6d9e1;"></div><div class="t" style="left:1710.4px;top:242.41px;font-size:11.8px;color:#222;font-weight:normal;letter-spacing:0.228px;">Width</div><div class="r" style="left:1788px;top:239px;width:74px;height:17px;background:#fff;"></div><div class="t" style="left:1792.3px;top:242.51px;font-size:11.8px;color:#222;font-weight:normal;letter-spacing:-0.662px;">1645</div><div class="r" style="left:1850px;top:239px;width:1px;height:17px;background:#c8ccd6;"></div><svg style="left:0;top:0" width="1" height="1"><path d="M1852 246.0l3.5-4l3.5 4zM1852 249.0l3.5 4l3.5-4z" fill="#222"/></svg><div class="r" style="left:1710px;top:257px;width:152px;height:1px;background:#d6d9e1;"></div><div class="t" style="left:1710.4px;top:262.71px;font-size:11.8px;color:#222;font-weight:normal;letter-spacing:0.215px;">Height</div><div class="r" style="left:1788px;top:259px;width:74px;height:17px;background:#fff;"></div><div class="t" style="left:1792.3px;top:262.51px;font-size:11.8px;color:#222;font-weight:normal;letter-spacing:-0.529px;">778</div><div class="r" style="left:1850px;top:259px;width:1px;height:17px;background:#c8ccd6;"></div><svg style="left:0;top:0" width="1" height="1"><path d="M1852 266.0l3.5-4l3.5 4zM1852 269.0l3.5 4l3.5-4z" fill="#222"/></svg><div class="r" style="left:1710px;top:278px;width:152px;height:1px;background:#d6d9e1;"></div><div class="t" style="left:1710.4px;top:283.51px;font-size:11.8px;color:#222;font-weight:normal;letter-spacing:0.083px;">Projection</div><div class="r" style="left:1788px;top:279px;width:74px;height:19px;background:#fff;"></div><div class="t" style="left:1792.3px;top:284.51px;font-size:11.8px;color:#222;font-weight:normal;letter-spacing:-0.239px;">Perspectiv</div><div class="r" style="left:1710px;top:299px;width:152px;height:1px;background:#d6d9e1;"></div><div class="t" style="left:1710.4px;top:305.81px;font-size:11.8px;color:#222;font-weight:normal;letter-spacing:0.043px;">Display mode</div><div class="r" style="left:1788px;top:301px;width:74px;height:20px;background:#fff;"></div><div class="t" style="left:1792.3px;top:307.51px;font-size:11.8px;color:#222;font-weight:normal;letter-spacing:-0.190px;">Wireframe</div><div class="r" style="left:1710px;top:321.5px;width:152px;height:1px;background:#d6d9e1;"></div><svg style="left:0;top:0" width="1" height="1"><path d="M1852.5 288l2.5 2.5l2.5-2.5" fill="none" stroke="#222" stroke-width="1.1"/></svg><svg style="left:0;top:0" width="1" height="1"><path d="M1852.5 310l2.5 2.5l2.5-2.5" fill="none" stroke="#222" stroke-width="1.1"/></svg><div class="r" style="left:1845px;top:279px;width:6px;height:19px;background:#fff;"></div><div class="r" style="left:1845px;top:301px;width:6px;height:20px;background:#fff;"></div><div class="t" style="left:1710.4px;top:326.11px;font-size:11.8px;color:#222;font-weight:normal;letter-spacing:-0.125px;">Locked</div><div class="r" style="left:1789px;top:325px;width:12px;height:12px;border:1px solid #c0c6d2;background:#fff;"></div><div class="r" style="left:1710px;top:341px;width:152px;height:1px;background:#d6d9e1;"></div><div class="t" style="left:1694.4px;top:347.23px;font-size:13.2px;color:#222;font-weight:normal;letter-spacing:-0.207px;">Camera</div><div class="r" style="left:1694px;top:364px;width:168px;height:1px;background:#d6d9e1;"></div><div class="r" style="left:1710px;top:366px;width:73px;height:18px;overflow:hidden"><div class="t" style="left:0.5px;top:3.61px;font-size:11.8px;color:#222;font-weight:normal;letter-spacing:-0.715px;">Lens Length (mm)</div></div><div class="r" style="left:1788px;top:366px;width:74px;height:17px;background:#fff;"></div><div class="t" style="left:1792.3px;top:369.51px;font-size:11.8px;color:#222;font-weight:normal;letter-spacing:-0.566px;">50.0</div><div class="r" style="left:1850px;top:366px;width:1px;height:17px;background:#c8ccd6;"></div><svg style="left:0;top:0" width="1" height="1"><path d="M1852 373.0l3.5-4l3.5 4zM1852 376.0l3.5 4l3.5-4z" fill="#222"/></svg><div class="r" style="left:1710px;top:384.5px;width:152px;height:1px;background:#d6d9e1;"></div><div class="t" style="left:1710.4px;top:389.81px;font-size:11.8px;color:#222;font-weight:normal;letter-spacing:0.019px;">Rotation</div><div class="r" style="left:1788px;top:386px;width:74px;height:16.80000000000001px;background:#fff;"></div><div class="t" style="left:1792.3px;top:389.31px;font-size:11.8px;color:#222;font-weight:normal;letter-spacing:-0.567px;">0.0</div><div class="r" style="left:1850px;top:386px;width:1px;height:16.80000000000001px;background:#c8ccd6;"></div><svg style="left:0;top:0" width="1" height="1"><path d="M1852 392.9l3.5-4l3.5 4zM1852 395.9l3.5 4l3.5-4z" fill="#222"/></svg><div class="r" style="left:1710px;top:404.5px;width:152px;height:1px;background:#d6d9e1;"></div><div class="t" style="left:1710.4px;top:409.41px;font-size:11.8px;color:#222;font-weight:normal;letter-spacing:-0.066px;">X Location</div><div class="r" style="left:1788px;top:406px;width:74px;height:16.69999999999999px;background:#fff;"></div><div class="t" style="left:1792.3px;top:409.21px;font-size:11.8px;color:#222;font-weight:normal;letter-spacing:-0.422px;">-123.537</div><div class="r" style="left:1850px;top:406px;width:1px;height:16.69999999999999px;background:#c8ccd6;"></div><svg style="left:0;top:0" width="1" height="1"><path d="M1852 412.9l3.5-4l3.5 4zM1852 415.9l3.5 4l3.5-4z" fill="#222"/></svg><div class="r" style="left:1710px;top:424.5px;width:152px;height:1px;background:#d6d9e1;"></div><div class="t" style="left:1710.4px;top:429.21px;font-size:11.8px;color:#222;font-weight:normal;letter-spacing:-0.044px;">Y Location</div><div class="r" style="left:1788px;top:426px;width:74px;height:16.80000000000001px;background:#fff;"></div><div class="t" style="left:1792.3px;top:429.31px;font-size:11.8px;color:#222;font-weight:normal;letter-spacing:-0.607px;">366.508</div><div class="r" style="left:1850px;top:426px;width:1px;height:16.80000000000001px;background:#c8ccd6;"></div><svg style="left:0;top:0" width="1" height="1"><path d="M1852 432.9l3.5-4l3.5 4zM1852 435.9l3.5 4l3.5-4z" fill="#222"/></svg><div class="r" style="left:1710px;top:444.4px;width:152px;height:1px;background:#d6d9e1;"></div><div class="t" style="left:1710.4px;top:449.21px;font-size:11.8px;color:#222;font-weight:normal;letter-spacing:0.001px;">Z Location</div><div class="r" style="left:1788px;top:446px;width:74px;height:16.600000000000023px;background:#fff;"></div><div class="t" style="left:1792.3px;top:449.11px;font-size:11.8px;color:#222;font-weight:normal;letter-spacing:-0.292px;">-0.238</div><div class="r" style="left:1850px;top:446px;width:1px;height:16.600000000000023px;background:#c8ccd6;"></div><svg style="left:0;top:0" width="1" height="1"><path d="M1852 452.8l3.5-4l3.5 4zM1852 455.8l3.5 4l3.5-4z" fill="#222"/></svg><div class="r" style="left:1710px;top:464.4px;width:152px;height:1px;background:#d6d9e1;"></div><div class="r" style="left:1710px;top:466px;width:73px;height:18px;overflow:hidden"><div class="t" style="left:0.3px;top:3.21px;font-size:11.8px;color:#222;font-weight:normal;letter-spacing:-0.128px;">Distance to Target</div></div><div class="r" style="left:1788px;top:466px;width:74px;height:17px;background:#fff;"></div><div class="t" style="left:1792.3px;top:469.51px;font-size:11.8px;color:#222;font-weight:normal;letter-spacing:-0.607px;">244.726</div><div class="r" style="left:1710px;top:484.8px;width:152px;height:1px;background:#d6d9e1;"></div><div class="t" style="left:1710.4px;top:492.41px;font-size:11.8px;color:#222;font-weight:normal;letter-spacing:0.049px;">Location</div><div class="r" style="left:1788px;top:486px;width:73px;height:22px;background:#e6e9f0;border:1px solid #b4bcd0;box-sizing:border-box;height:23px"></div><div class="t" style="left:1806.2px;top:492.61px;font-size:11.8px;color:#222;font-weight:normal;letter-spacing:-0.369px;">Place...</div><div class="r" style="left:1710px;top:510px;width:152px;height:1px;background:#d6d9e1;"></div><div class="t" style="left:1694.3px;top:516.33px;font-size:13.2px;color:#222;font-weight:normal;letter-spacing:-0.131px;">Target</div><div class="r" style="left:1694px;top:533px;width:168px;height:1px;background:#d6d9e1;"></div><div class="t" style="left:1710.4px;top:538.41px;font-size:11.8px;color:#222;font-weight:normal;letter-spacing:-0.166px;">X Target</div><div class="r" style="left:1788px;top:535px;width:74px;height:16.799999999999955px;background:#fff;"></div><div class="t" style="left:1792.3px;top:538.31px;font-size:11.8px;color:#222;font-weight:normal;letter-spacing:-0.615px;">24.848</div><div class="r" style="left:1850px;top:535px;width:1px;height:16.799999999999955px;background:#c8ccd6;"></div><svg style="left:0;top:0" width="1" height="1"><path d="M1852 541.9l3.5-4l3.5 4zM1852 544.9l3.5 4l3.5-4z" fill="#222"/></svg><div class="r" style="left:1710px;top:553.5px;width:152px;height:1px;background:#d6d9e1;"></div><div class="t" style="left:1710.4px;top:558.31px;font-size:11.8px;color:#222;font-weight:normal;letter-spacing:-0.139px;">Y Target</div><div class="r" style="left:1788px;top:555px;width:74px;height:17px;background:#fff;"></div><div class="t" style="left:1792.3px;top:558.51px;font-size:11.8px;color:#222;font-weight:normal;letter-spacing:-0.568px;">175.211</div><div class="r" style="left:1850px;top:555px;width:1px;height:17px;background:#c8ccd6;"></div><svg style="left:0;top:0" width="1" height="1"><path d="M1852 562.0l3.5-4l3.5 4zM1852 565.0l3.5 4l3.5-4z" fill="#222"/></svg><div class="r" style="left:1710px;top:573.5px;width:152px;height:1px;background:#d6d9e1;"></div><div class="t" style="left:1710.4px;top:578.21px;font-size:11.8px;color:#222;font-weight:normal;letter-spacing:-0.083px;">Z Target</div><div class="r" style="left:1788px;top:575px;width:74px;height:16.600000000000023px;background:#fff;"></div><div class="t" style="left:1792.3px;top:578.11px;font-size:11.8px;color:#222;font-weight:normal;letter-spacing:-0.317px;">-35.988</div><div class="r" style="left:1850px;top:575px;width:1px;height:16.600000000000023px;background:#c8ccd6;"></div><svg style="left:0;top:0" width="1" height="1"><path d="M1852 581.8l3.5-4l3.5 4zM1852 584.8l3.5 4l3.5-4z" fill="#222"/></svg><div class="r" style="left:1710px;top:593.5px;width:152px;height:1px;background:#d6d9e1;"></div><div class="t" style="left:1710.4px;top:602.21px;font-size:11.8px;color:#222;font-weight:normal;letter-spacing:0.086px;">Location</div><div class="r" style="left:1788px;top:595px;width:73px;height:22px;background:#e6e9f0;border:1px solid #b4bcd0;box-sizing:border-box;height:23px"></div><div class="t" style="left:1806.5px;top:601.61px;font-size:11.8px;color:#222;font-weight:normal;letter-spacing:-0.394px;">Place...</div><div class="r" style="left:1710px;top:619.5px;width:152px;height:1px;background:#d6d9e1;"></div><div class="t" style="left:1694.3px;top:625.03px;font-size:13.2px;color:#222;font-weight:normal;letter-spacing:0.041px;">Wallpaper</div><div class="r" style="left:1694px;top:642px;width:168px;height:1px;background:#d6d9e1;"></div><div class="t" style="left:1710.4px;top:650.31px;font-size:11.8px;color:#222;font-weight:normal;letter-spacing:-0.141px;">Filename</div><div class="r" style="left:1788px;top:644px;width:49px;height:22px;background:#fff;border:1px solid #b4bcd0;box-sizing:border-box"></div><div class="t" style="left:1791.4px;top:650.31px;font-size:11.8px;color:#777;font-weight:normal;letter-spacing:-0.034px;">(none)</div><div class="r" style="left:1838px;top:644px;width:24px;height:22px;background:#e6e9f0;border:1px solid #b4bcd0;box-sizing:border-box"></div><div class="t" style="left:1845.5px;top:650.31px;font-size:11.8px;color:#222;font-weight:normal;">...</div><div class="r" style="left:1710px;top:668.5px;width:152px;height:1px;background:#d6d9e1;"></div><div class="t" style="left:1710.4px;top:673.31px;font-size:11.8px;color:#222;font-weight:normal;letter-spacing:-0.229px;">Show</div><div class="r" style="left:1789px;top:672px;width:12px;height:12px;border:1px solid #c0c6d2;background:#fff;"></div><svg style="left:1791px;top:674px" width="10" height="10"><path d="M1 5l2.8 3.2l5-7" fill="none" stroke="#222" stroke-width="2"/></svg><div class="r" style="left:1710px;top:689px;width:152px;height:1px;background:#d6d9e1;"></div><div class="t" style="left:1710.4px;top:693.11px;font-size:11.8px;color:#222;font-weight:normal;letter-spacing:-0.492px;">Gray</div><div class="r" style="left:1789px;top:692px;width:12px;height:12px;border:1px solid #c0c6d2;background:#fff;"></div><svg style="left:1791px;top:694px" width="10" height="10"><path d="M1 5l2.8 3.2l5-7" fill="none" stroke="#222" stroke-width="2"/></svg><div class="r" style="left:1710px;top:708px;width:152px;height:1px;background:#d6d9e1;"></div><svg style="left:0;top:0;pointer-events:none" width="1878" height="1004" viewBox="0 0 1878 1004"><path d="M-2 97C2 96 5 97 6 100L5.5 112C5 115 4 117 3.5 118" fill="#fff" stroke="#111" stroke-width="1"/><ellipse cx="25.5" cy="106.5" rx="11" ry="3.8" fill="none" stroke="#333" stroke-width="0.9"/><ellipse cx="25.5" cy="106.5" rx="3.8" ry="10.5" fill="none" stroke="#333" stroke-width="0.9"/><path d="M29 101l-2.5 4h5zM21 109l4-2.5v5z" fill="#111"/><path d="M29 103v9M22 109h6" stroke="#111" stroke-width="1.2"/><path d="M52.1 108.4L47.8 112.7" stroke="#111" stroke-width="2.6" stroke-linecap="butt"/><circle cx="56.5" cy="104" r="6.2" fill="#f4f4f4" stroke="#111" stroke-width="1.1"/><text x="56.5" y="107.5" font-size="9" text-anchor="middle" fill="#111" font-family="Liberation Sans">±</text><path d="M79.0 109.5L74.7 113.8" stroke="#111" stroke-width="2.6" stroke-linecap="butt"/><circle cx="83.5" cy="105" r="6.3" fill="#f4f4f4" stroke="#111" stroke-width="1.1"/><path d="M72 97h4l-4 4zM95 97h-4l4 4zM72 117v-4l4 4zM95 117h-4l4-4z" fill="#111"/><rect x="105.5" y="97.5" width="15" height="13" fill="none" stroke="#111" stroke-width="1" stroke-dasharray="1.5 1.5"/><path d="M104.8 111.7L100.4 116.1" stroke="#111" stroke-width="2.6" stroke-linecap="butt"/><circle cx="109" cy="107.5" r="6" fill="#f4f4f4" stroke="#111" stroke-width="1.1"/><path d="M105 110h8" stroke="#555" stroke-width="0.8" stroke-dasharray="1.5 1.5"/><path d="M134.9 110.6L130.6 114.9" stroke="#111" stroke-width="2.6" stroke-linecap="butt"/><circle cx="140" cy="105.5" r="7.2" fill="#e8e8e8" stroke="#111" stroke-width="1.1"/><circle cx="141.5" cy="103.5" r="2.6" fill="#f0d800"/><circle cx="138.5" cy="108" r="2.6" fill="#f0d800"/><path d="M157 102C161 98 168 97 175 101" fill="none" stroke="#333" stroke-width="2.4"/><path d="M156 99l6 5h-7z" fill="#111"/><path d="M162.8 114.2L159.2 117.8" stroke="#111" stroke-width="2.6" stroke-linecap="butt"/><circle cx="166.5" cy="110.5" r="5.3" fill="#f4f4f4" stroke="#111" stroke-width="1.1"/><path d="M180 120h-5l5-5z" fill="#6a6a6a"/><path d="M188.1 108.4L183.8 112.7" stroke="#111" stroke-width="2.6" stroke-linecap="butt"/><circle cx="192.5" cy="104" r="6.2" fill="#f4f4f4" stroke="#111" stroke-width="1.1"/><path d="M194 104l7 8" stroke="#222" stroke-width="0.9" stroke-dasharray="1.2 1.2"/><rect x="201" y="112" width="4" height="4" fill="#fff" stroke="#111" stroke-width="1.2"/><path d="M219.1 110.4L214.7 114.8" stroke="#111" stroke-width="2.6" stroke-linecap="butt"/><circle cx="224" cy="105.5" r="7" fill="#f4f4f4" stroke="#111" stroke-width="1.1"/><text x="224" y="109" font-size="8" font-weight="bold" text-anchor="middle" fill="#111" font-family="Liberation Sans">1:1</text><rect x="250" y="98" width="11" height="17.5" rx="2.5" fill="#e01010" stroke="#900" stroke-width="0.6"/><rect x="251.5" y="101" width="8" height="8" fill="none" stroke="#fff" stroke-width="1.3"/><rect x="251" y="113.5" width="2.5" height="2" fill="#ff0"/><rect x="257.5" y="113.5" width="2.5" height="2" fill="#ff0"/><path d="M252 97.5h7" stroke="#111" stroke-width="1"/><rect x="278" y="99" width="11" height="17" rx="2" fill="#6a6a70" stroke="#ff1010" stroke-width="1"/><path d="M283.5 99v18" stroke="#222" stroke-width="1.5"/><rect x="277.5" y="100" width="2" height="3" fill="#111"/><rect x="287.5" y="100" width="2" height="3" fill="#111"/><rect x="277.5" y="112" width="2" height="3" fill="#111"/><rect x="287.5" y="112" width="2" height="3" fill="#111"/><path d="M302 111.5h18" stroke="#999" stroke-width="0.8"/><path d="M306 111v-5l2-4h7l2 4v5z" fill="#e01010"/><rect x="308" y="103" width="7" height="2.5" fill="#fff"/><rect x="306.5" y="106.5" width="2" height="2" fill="#ff0"/><rect x="314.5" y="106.5" width="2" height="2" fill="#ff0"/><rect x="306" y="110" width="2.5" height="2" fill="#111"/><rect x="314.5" y="110" width="2.5" height="2" fill="#111"/><path d="M328 111.5h20" stroke="#999" stroke-width="0.8"/><path d="M329 110v-3l4-1.5l2-3.5h6l3 3.5l3 1v3.5z" fill="#e01010"/><rect x="336" y="102.5" width="5" height="2.5" fill="#fff"/><circle cx="333" cy="110" r="1.8" fill="#222"/><circle cx="344" cy="110" r="1.8" fill="#222"/><path d="M357 111.5h20" stroke="#999" stroke-width="0.8"/><path d="M358 110v-3.5l3-1l3-3.5h6l2 3.5l4 1.5v3z" fill="#e01010"/><rect x="364" y="102.5" width="5" height="2.5" fill="#fff"/><circle cx="362" cy="110" r="1.8" fill="#222"/><circle cx="373" cy="110" r="1.8" fill="#222"/><path d="M386 111.5h18" stroke="#999" stroke-width="0.8"/><path d="M389.5 111v-5l2-4h7l2 4v5z" fill="#e01010"/><rect x="391.5" y="103" width="7" height="2.5" fill="#fff"/><rect x="390" y="107.5" width="10" height="1.5" fill="#222"/><rect x="389.5" y="110" width="2.5" height="2" fill="#111"/><rect x="398" y="110" width="2.5" height="2" fill="#111"/><path d="M414 107l5-5l4-3h4l4 2.5l1 3.5l-6 6l-5 1.5l-5-1.5z" fill="#e01010"/><path d="M420 104l4-3h3l-4 4z" fill="#fff"/><circle cx="418.5" cy="111.5" r="1.6" fill="#333"/><circle cx="428.5" cy="106.5" r="1.6" fill="#333"/><rect x="414" y="106" width="2" height="2" fill="#ff0"/><path d="M445 115v-2.5l3-1l2-3h6l2 3l5 1v2.5z" fill="#8a8a8a" stroke="#333" stroke-width="0.6"/><rect x="451" y="109.5" width="5" height="2" fill="#eee"/><circle cx="449" cy="115" r="1.8" fill="#222"/><circle cx="460" cy="115" r="1.8" fill="#222"/><path d="M453 103l3-4h8l3-2v6l-3-1.5h-6z" fill="#aaa" stroke="#333" stroke-width="0.6"/><rect x="466" y="95.5" width="2" height="7" fill="#111"/><g transform="translate(473.5 97.5) scale(1.0)"><path d="M0 4.5c0-1.5 1-3 3-3h1.5l1-1.5h1.5l1 1.5h1.5l1-1.8h6.5l1 1.8h1.5c1.5 0 2.5 1.5 2.5 3v11c0 0.8-0.6 1.2-1.2 1.2h-19.6c-0.7 0-1.2-0.5-1.2-1.2z" fill="#1c1c1c"/><circle cx="12" cy="10.3" r="5.5" fill="url(#lens)" stroke="#8a8a8a" stroke-width="0.8"/><path d="M12.5 11.5l3-3.5" stroke="#4a8a4a" stroke-width="1"/></g><rect x="509" y="96" width="14" height="14" rx="1" fill="#e4d48a" stroke="#333" stroke-width="0.8"/><rect x="511" y="97" width="10" height="5" fill="#eee"/><rect x="513" y="105" width="6" height="4" fill="#776"/><path d="M501 115v-2.5l3-1l2-3h6l2 3l5 1v2.5z" fill="#8a8a8a" stroke="#333" stroke-width="0.6"/><rect x="507" y="109.5" width="5" height="2" fill="#eee"/><circle cx="505" cy="115" r="1.8" fill="#222"/><circle cx="516" cy="115" r="1.8" fill="#222"/><rect x="533" y="96" width="19" height="19" fill="#cfcfcf" stroke="#222" stroke-width="1.1"/><path d="M542.5 96v19M533 105.5h19" stroke="#222" stroke-width="1"/><path d="M533 97.5h4M543 97h4" stroke="#35c" stroke-width="1"/><path d="M528.5 117.5l3-8h19l-3 8z" fill="#f0d870" stroke="#111" stroke-width="1.1"/><path d="M528.5 117.5v-12l3-2h3l1 2" fill="#f0d870" stroke="#111" stroke-width="1.1"/><path d="M556.5 117l4-8h13l4 8z" fill="none" stroke="#aaa" stroke-width="0.7"/><path d="M558.5 113h18M564.5 109l-1 8M570.5 109l1 8" stroke="#bbb" stroke-width="0.6"/><circle cx="567.5" cy="106.5" r="5.3" fill="#ddd" stroke="#333" stroke-width="0.8"/><circle cx="566" cy="105" r="2.5" fill="#fff"/><path d="M585 117l4-8h13l4 8z" fill="none" stroke="#aaa" stroke-width="0.7"/><path d="M587 113h18M593 109l-1 8M599 109l1 8" stroke="#bbb" stroke-width="0.6"/><circle cx="596" cy="107" r="5.3" fill="#ddd" stroke="#333" stroke-width="0.8"/><circle cx="594.5" cy="105.5" r="2.5" fill="#fff"/><text x="584.5" y="104.5" font-size="11.5" fill="#111" font-family="Liberation Sans">2</text><circle cx="629" cy="107" r="8.8" fill="none" stroke="#111" stroke-width="1.1"/><rect x="627.2" y="105.2" width="3.6" height="3.6" fill="none" stroke="#111" stroke-width="1"/><path d="M620 107h2M636 107h2M629 98v2M629 114v2" stroke="#666" stroke-width="0.6"/><circle cx="657.5" cy="106.5" r="9.5" fill="none" stroke="#111" stroke-width="1.2"/><path d="M646 106.5h4M665 106.5h4M657.5 95v4M657.5 114v4" stroke="#111" stroke-width="1.1"/><circle cx="659" cy="105" r="2.7" fill="#f0d800" stroke="#444" stroke-width="0.4"/><circle cx="656" cy="108.5" r="2.7" fill="#f0d800" stroke="#444" stroke-width="0.4"/><path d="M674 117.5l3-6h15l3 6z" fill="none" stroke="#aaa" stroke-width="0.7"/><path d="M676 114.5h17M680 111.5l-1 6M685 111.5v6M690 111.5l1 6" stroke="#bbb" stroke-width="0.6"/><path d="M684.5 104v13" stroke="#111" stroke-width="0.8" stroke-dasharray="1 1"/><path d="M685 112h8" stroke="#e22" stroke-width="1"/><path d="M684.5 112v6" stroke="#2a2" stroke-width="1"/><path d="M682 96h5v3h2l-4.5 5l-4.5-5h2z" fill="#fff" stroke="#111" stroke-width="1"/><path d="M706 108l8-6l10 6l-8 7z" fill="#4a78e0" stroke="#223" stroke-width="0.6"/><path d="M710 105l10 6M715 102l-5 9" stroke="#cde" stroke-width="0.6"/><g transform="translate(701 96) scale(0.72)"><path d="M0 4.5c0-1.5 1-3 3-3h1.5l1-1.5h1.5l1 1.5h1.5l1-1.8h6.5l1 1.8h1.5c1.5 0 2.5 1.5 2.5 3v11c0 0.8-0.6 1.2-1.2 1.2h-19.6c-0.7 0-1.2-0.5-1.2-1.2z" fill="#1c1c1c"/><circle cx="12" cy="10.3" r="5.5" fill="url(#lens)" stroke="#8a8a8a" stroke-width="0.9"/></g><path d="M731 99l10-3l9 3v12l-9 5l-8-5z" fill="#d8d8d8" stroke="#222" stroke-width="1"/><path d="M731 99l9 4l10-4M740 103v13" fill="none" stroke="#222" stroke-width="1"/><path d="M740 103l10-4v12l-9 5z" fill="#888"/><circle cx="731.5" cy="99" r="1.6" fill="#fff" stroke="#111" stroke-width="0.8"/><circle cx="742.5" cy="104" r="1.6" fill="#fff" stroke="#111" stroke-width="0.8"/><circle cx="749.5" cy="109.5" r="1.6" fill="#fff" stroke="#111" stroke-width="0.8"/><circle cx="734" cy="110" r="1.6" fill="#fff" stroke="#111" stroke-width="0.8"/><circle cx="742.5" cy="116" r="1.6" fill="#fff" stroke="#111" stroke-width="0.8"/><rect x="764.5" y="101" width="18" height="4.5" fill="#fff" stroke="#111" stroke-width="1.2"/><rect x="768" y="112" width="11" height="3" fill="#fff" stroke="#111" stroke-width="1.1"/><ellipse cx="773.5" cy="106.5" rx="2" ry="9" fill="#6a8ae0" stroke="#111" stroke-width="0.8"/><path d="M770 96h7M773.5 116v2" stroke="#111" stroke-width="1"/><rect x="792" y="106" width="19" height="4.5" fill="#fff" stroke="#111" stroke-width="1.2"/><rect x="797" y="99" width="9" height="3" fill="#fff" stroke="#111" stroke-width="1.1"/><ellipse cx="801.5" cy="107" rx="2" ry="8" fill="#6a8ae0" stroke="#111" stroke-width="0.8"/><path d="M798 117h7M801.5 96v3" stroke="#111" stroke-width="1"/><path d="M820 104.5h19" stroke="#111" stroke-width="1.2"/><path d="M826 111l3.5-6l3.5 6" fill="none" stroke="#111" stroke-width="1.1"/><circle cx="829.5" cy="106" r="1.8" fill="#9ab"/><path d="M829.5 102v3" stroke="#35c" stroke-width="1"/><path d="M848 104.5h19" stroke="#111" stroke-width="1.2"/><path d="M854 111l3.5-6l3.5 6" fill="none" stroke="#111" stroke-width="1.1"/><circle cx="857.5" cy="106" r="1.8" fill="#56c"/><path d="M857.5 102v3" stroke="#35c" stroke-width="1"/><path d="M876 106c4 2 10 2 16-1l3-3v2l-3 3c-5 3-11 3-16 1z" fill="#2040b0" stroke="#111" stroke-width="0.6"/><path d="M882 104c2-2 5-2 7 0z" fill="#fff" stroke="#22a" stroke-width="0.7"/><path d="M876 104v5" stroke="#111" stroke-width="1"/><path d="M881 110h8" stroke="#333" stroke-width="0.8"/><path d="M922 106c-4 2-10 2-16-1l-3-3v2l3 3c5 3 11 3 16 1z" fill="#2040b0" stroke="#111" stroke-width="0.6"/><path d="M916 104c-2-2-5-2-7 0z" fill="#fff" stroke="#22a" stroke-width="0.7"/><path d="M924 104v5" stroke="#111" stroke-width="1"/><path d="M909 110h8" stroke="#333" stroke-width="0.8"/><text x="935.5" y="103" font-size="9.5" fill="#111" font-family="Liberation Sans">360°</text><path d="M948 117c-7 0-10-2-10-4.5s4-4 9-4s9 1.5 9 4c0 1.5-2 3-4 3.5" fill="none" stroke="#111" stroke-width="2"/><path d="M943 113l7 3l-6 4z" fill="#111"/><circle cx="972" cy="97.5" r="2.2" fill="#111"/><path d="M971 101l-3 5l-1.5 1M971 101l4 2l2 3M971 101l-1 7l-2.5 8M970 108l4 3l2.5 5.5" fill="none" stroke="#111" stroke-width="2"/><path d="M989 120h-5l5-5z" fill="#6a6a6a"/><path d="M994 107h18M1003 98v19" stroke="#111" stroke-width="1.6"/><path d="M998 102l10 10M1008 102l-10 10" stroke="#555" stroke-width="0.9"/><circle cx="1009" cy="100" r="3.3" fill="#ef6f72"/><path d="M1017 120h-5l5-5z" fill="#6a6a6a"/><circle cx="1031" cy="107" r="9" fill="#f4f4f4" stroke="#111" stroke-width="1.1"/><circle cx="1031" cy="107" r="1" fill="#111"/><path d="M1031 98.5v2M1031 113.5v2M1022.5 107h2M1037.5 107h2M1025 101l1 1M1037 101l-1 1M1025 113l1-1M1037 113l-1-1" stroke="#111" stroke-width="0.8"/><circle cx="2.5" cy="133.5" r="1.4" fill="none" stroke="#b8bcc6" stroke-width="0.8"/><circle cx="8.5" cy="133.5" r="1.4" fill="none" stroke="#b8bcc6" stroke-width="0.8"/><circle cx="14.5" cy="133.5" r="1.4" fill="none" stroke="#b8bcc6" stroke-width="0.8"/><path d="M0 138.5H36" stroke="#d3d6de" stroke-width="1"/><path d="M30 166.5h-5l5-5z" fill="#6a6a6a"/><path d="M30 195h-5l5-5z" fill="#6a6a6a"/><path d="M30 222.5h-5l5-5z" fill="#6a6a6a"/><path d="M30 250h-5l5-5z" fill="#6a6a6a"/><path d="M30 278.5h-5l5-5z" fill="#6a6a6a"/><path d="M30 306.5h-5l5-5z" fill="#6a6a6a"/><path d="M30 334.5h-5l5-5z" fill="#6a6a6a"/><path d="M30 362.5h-5l5-5z" fill="#6a6a6a"/><path d="M30 475h-5l5-5z" fill="#6a6a6a"/><path d="M30 503.5h-5l5-5z" fill="#6a6a6a"/><path d="M30 560h-5l5-5z" fill="#6a6a6a"/><path d="M30 588.5h-5l5-5z" fill="#6a6a6a"/><path d="M30 616.5h-5l5-5z" fill="#6a6a6a"/><path d="M30 644.5h-5l5-5z" fill="#6a6a6a"/><path d="M0 195h2v-4z" fill="#6a6a6a"/><path d="M0 222.5h2v-4z" fill="#6a6a6a"/><path d="M0 250h2v-4z" fill="#6a6a6a"/><path d="M0 278.5h2v-4z" fill="#6a6a6a"/><path d="M0 306.5h2v-4z" fill="#6a6a6a"/><path d="M0 334.5h2v-4z" fill="#6a6a6a"/><path d="M0 362.5h2v-4z" fill="#6a6a6a"/><path d="M0 391h2v-4z" fill="#6a6a6a"/><path d="M0 447.5h2v-4z" fill="#6a6a6a"/><path d="M0 560h2v-4z" fill="#6a6a6a"/><path d="M0 588.5h2v-4z" fill="#6a6a6a"/><path d="M0 616.5h2v-4z" fill="#6a6a6a"/><path d="M0 644.5h2v-4z" fill="#6a6a6a"/><path d="M0 672h2v-4z" fill="#6a6a6a"/><circle cx="15.5" cy="152.5" r="1.8" fill="#fff" stroke="#111" stroke-width="1"/><path d="M8 175C20 173 24 178 23 183C22 188 17 189 8 187" fill="none" stroke="#111" stroke-width="1"/><rect x="6.5" y="173.5" width="3" height="3" fill="#fff" stroke="#111" stroke-width="0.9"/><rect x="20.5" y="170.5" width="3" height="3" fill="#fff" stroke="#111" stroke-width="0.9"/><rect x="6.5" y="185.5" width="3" height="3" fill="#fff" stroke="#111" stroke-width="0.9"/><rect x="22.5" y="187.5" width="3" height="3" fill="#fff" stroke="#111" stroke-width="0.9"/><ellipse cx="16" cy="209.5" rx="10" ry="6.5" fill="none" stroke="#111" stroke-width="1"/><path d="M16 203v6h9" fill="none" stroke="#111" stroke-width="0.8"/><rect x="14.5" y="201.0" width="3" height="3" fill="#fff" stroke="#111" stroke-width="0.9"/><rect x="14.5" y="208.0" width="3" height="3" fill="#fff" stroke="#111" stroke-width="0.9"/><rect x="23.5" y="208.0" width="3" height="3" fill="#fff" stroke="#111" stroke-width="0.9"/><rect x="8" y="232" width="16.5" height="10.5" fill="none" stroke="#111" stroke-width="1"/><rect x="22.5" y="230.5" width="3" height="3" fill="#fff" stroke="#111" stroke-width="0.9"/><rect x="6.5" y="241.0" width="3" height="3" fill="#fff" stroke="#111" stroke-width="0.9"/><path d="M24.5 256.5V272" stroke="#aaa" stroke-width="0.8"/><path d="M8 257.5C18 257.5 24 262 24 272" fill="none" stroke="#111" stroke-width="1.6"/><rect x="6.5" y="256.0" width="3" height="3" fill="#fff" stroke="#111" stroke-width="0.9"/><rect x="22.5" y="270.5" width="3" height="3" fill="#fff" stroke="#111" stroke-width="0.9"/><path d="M7 289l5-4l10 3c3 2 3 5 2 8l-7 5v-5z" fill="#5a7fe0" stroke="#111" stroke-width="0.9"/><path d="M7 289l5-4l8 3l-4 4z" fill="#fff" stroke="#111" stroke-width="0.9"/><path d="M17 296v5l7-5v-3z" fill="#fff" stroke="#111" stroke-width="0.8"/><circle cx="19.5" cy="318" r="6.5" fill="#5a80e8" stroke="#112" stroke-width="0.9"/><circle cx="12" cy="324" r="6.5" fill="#5a80e8" stroke="#112" stroke-width="0.9"/><path d="M13 318l7 6M19 312l1 12M6 324h12" stroke="#224" stroke-width="0.5"/><path d="M6 352l6-8l15 4l-6 9z" fill="#6a8ef0" stroke="#111" stroke-width="1"/><path d="M9 348l15 4M16 346l-4 9M21 348l-4 8" stroke="#224" stroke-width="0.5"/><defs><linearGradient id="burstg" x1="0" y1="0" x2="0" y2="1"><stop offset="0" stop-color="#e83a10"/><stop offset="1" stop-color="#ffc000"/></linearGradient></defs><path d="M5.2 387.5V376.5L9 367.5L10.6 376.5L22.6 368.3L17.4 381L26.9 381.7L18 384.2L21 387.5Z" fill="url(#burstg)"/><path d="M5.2 376.5L9 367.5L10.6 376.5L22.6 368.3L17.4 381L26.9 381.7L18 384.2L21 387.5" fill="none" stroke="#111" stroke-width="0.9"/><rect x="6.5" y="405.5" width="18" height="5" fill="#fff" stroke="#111" stroke-width="1"/><path d="M17 398h5l-4 12h-3z" fill="#1a2a8a"/><circle cx="15.7" cy="428.7" r="3.4" fill="#5a80e8" stroke="#334" stroke-width="0.4"/><circle cx="10.6" cy="436.7" r="3.4" fill="#fff" stroke="#111" stroke-width="0.9"/><circle cx="20.6" cy="436.7" r="3.5" fill="#1a2a7a" stroke="#111" stroke-width="0.5"/><path d="M5 453h7M23 463v8" stroke="#111" stroke-width="0.8" stroke-dasharray="1 1"/><path d="M5.5 456C15 453 21 459 20.5 471" fill="none" stroke="#111" stroke-width="1.8"/><rect x="11.5" y="450.5" width="3" height="3" fill="#fff" stroke="#111" stroke-width="0.8"/><rect x="23.5" y="462" width="3" height="3" fill="#fff" stroke="#111" stroke-width="0.8"/><rect x="7.5" y="491.5" width="6" height="6" fill="#eee" stroke="#111" stroke-width="0.9"/><rect x="19.5" y="479.5" width="6" height="6" fill="#88a8f8" stroke="#111" stroke-width="0.9"/><path d="M13 491l6-6M15.5 485h3.5v3.5" fill="none" stroke="#111" stroke-width="0.9"/><rect x="5.5" y="507.5" width="5" height="10" fill="#f4f4f4" stroke="#111" stroke-width="0.9"/><path d="M13 524l10-10l4 3l-10 10z" fill="#6a8ef0" stroke="#111" stroke-width="0.9"/><path d="M11 509c5-1 8 0 10 4" fill="none" stroke="#111" stroke-width="0.8"/><path d="M5 548l4-4h18l-4 4z" fill="#6a8ef0" stroke="#111" stroke-width="0.8"/><path d="M10 545v-10M16 545v-10M22 545v-10" stroke="#999" stroke-width="1.4"/><path d="M8 537l2-3l2 3M14 537l2-3l2 3M20 537l2-3l2 3" fill="#999"/><rect x="11.5" y="563.5" width="9" height="5" fill="#fff" stroke="#111" stroke-width="0.9"/><rect x="13" y="570" width="6" height="4" fill="#fff" stroke="#111" stroke-width="0.9"/><rect x="12" y="575.5" width="8" height="5.5" fill="#fff" stroke="#111" stroke-width="0.9"/><path d="M16 562v20" stroke="#d11" stroke-width="1.2"/><rect x="11.5" y="590.5" width="3" height="14" fill="#8ab0ff" stroke="#111" stroke-width="0.8"/><circle cx="6" cy="595" r="1.6" fill="#111"/><circle cx="20" cy="595" r="1.6" fill="#111"/><path d="M6 597l2 4h4M20 597l-2 4l3 2l1 3l4 3" fill="none" stroke="#111" stroke-width="1.4"/><path d="M6 625l4-3l6 1v6l-4 3l-6-2z" fill="#ddd" stroke="#111" stroke-width="0.8"/><path d="M19 622l-4 11c2 2 8 2 10 0z" fill="#ccc" stroke="#111" stroke-width="0.8"/><defs><radialGradient id="sph" cx="0.55" cy="0.4" r="0.6"><stop offset="0" stop-color="#ffffff"/><stop offset="0.35" stop-color="#6a90e8"/><stop offset="1" stop-color="#0a1a90"/></radialGradient><radialGradient id="lens" cx="0.4" cy="0.4" r="0.6"><stop offset="0" stop-color="#5a7ab8"/><stop offset="0.6" stop-color="#1a1a22"/><stop offset="1" stop-color="#111"/></radialGradient></defs><path d="M1699 162.5c0-1.5 1-3 3-3h1.5l1-1.5h1.5l1 1.5h1.5l1-1.8h6.5l1 1.8h1.5c1.5 0 2.5 1.5 2.5 3v10.5c0 0.8-0.6 1.2-1.2 1.2h-19.6c-0.7 0-1.2-0.5-1.2-1.2z" fill="#222"/><circle cx="1712.3" cy="168" r="5" fill="url(#lens)" stroke="#888" stroke-width="0.7"/><path d="M1713 169l2.5-3" stroke="#4a8a4a" stroke-width="1"/><rect x="1730.5" y="155.5" width="23" height="21" fill="#d8d6d4" stroke="#5a5a5a" stroke-width="1"/><rect x="1732.6" y="158.6" width="18.8" height="15.8" fill="none" stroke="#30b8f0" stroke-width="1.2"/><rect x="1734.6" y="160.6" width="14.8" height="11.8" fill="#fff" stroke="#e80808" stroke-width="1.3"/><ellipse cx="1773" cy="174.5" rx="6" ry="2" fill="#bbb" opacity="0.6"/><circle cx="1781.3" cy="158.8" r="3.3" fill="url(#sph)"/><circle cx="1776.8" cy="163.7" r="4.4" fill="url(#sph)"/><circle cx="1770.2" cy="169.6" r="5.6" fill="url(#sph)"/></svg></body></html>
